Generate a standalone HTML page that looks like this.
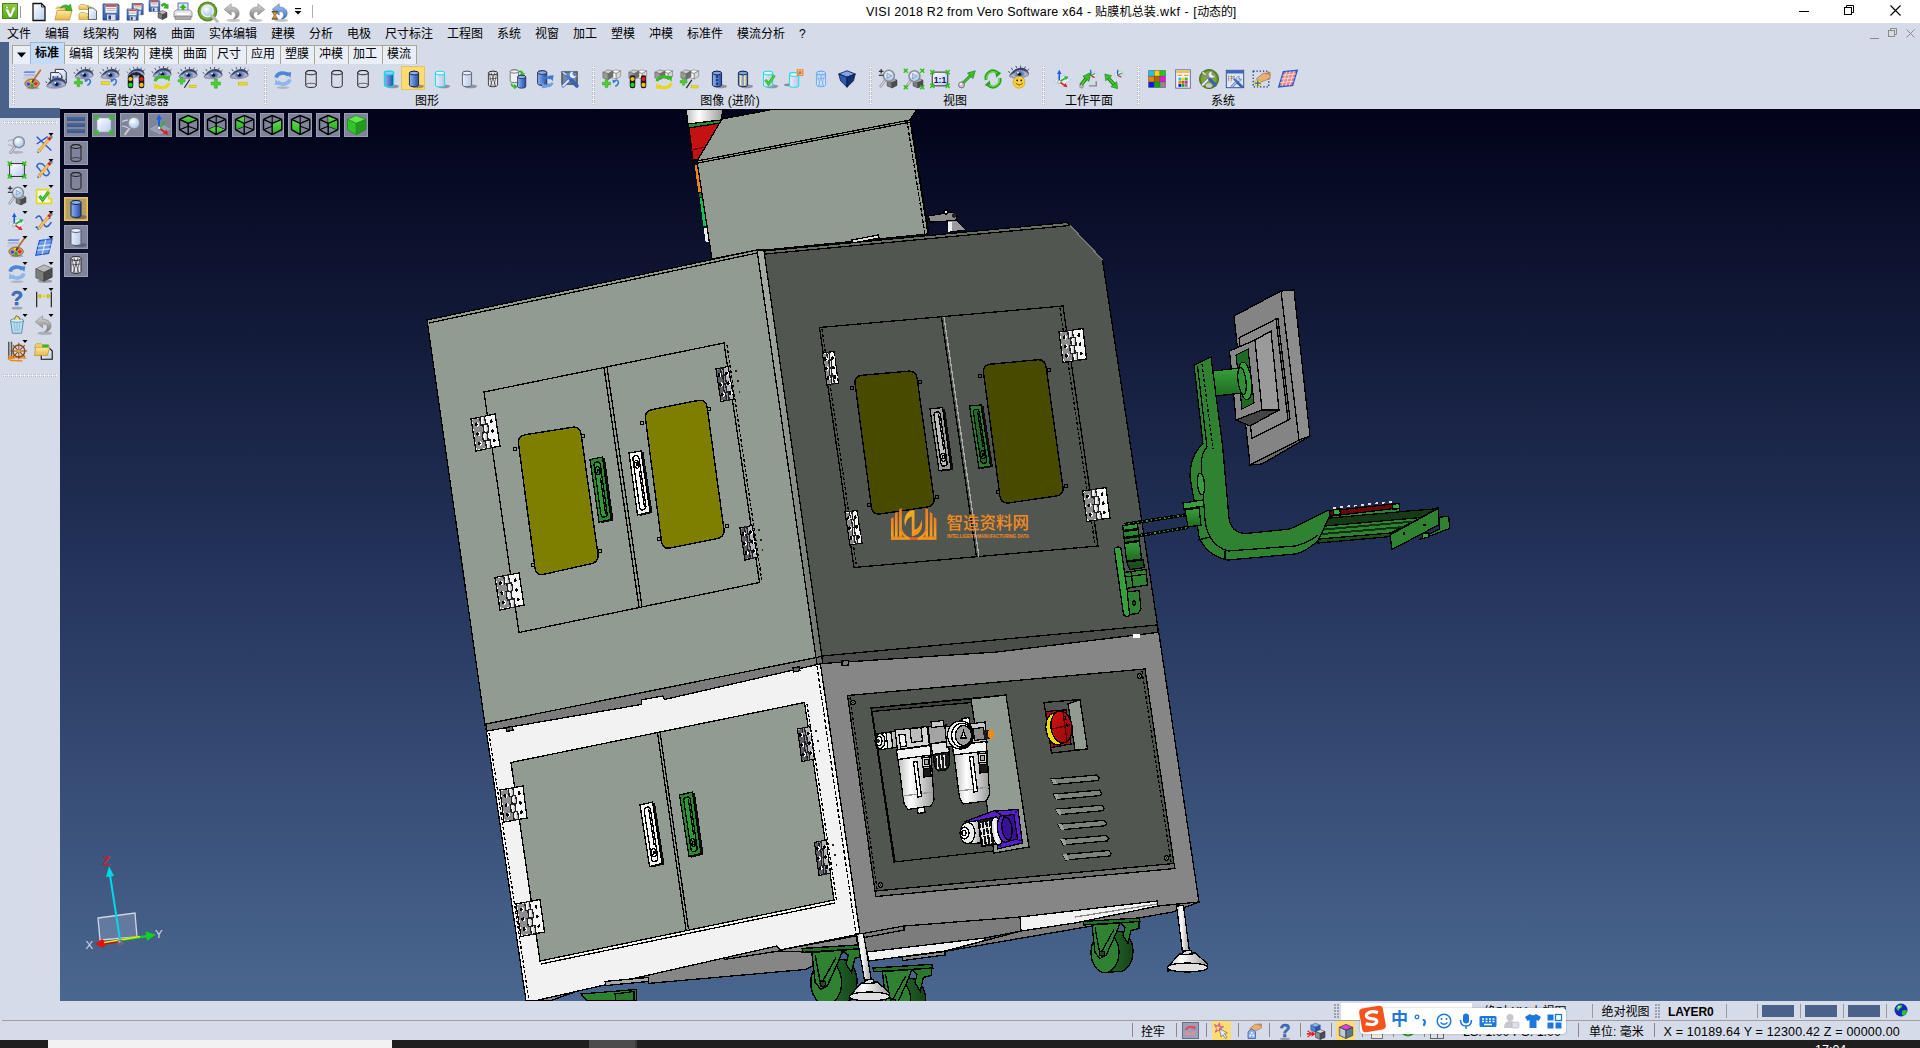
<!DOCTYPE html><html lang="zh"><head><meta charset="utf-8"><title>VISI 2018 R2</title><style>
*{box-sizing:border-box;margin:0;padding:0}
html,body{width:1920px;height:1048px;overflow:hidden;background:#d6dbe9;font-family:'Liberation Sans','Noto Sans CJK SC',sans-serif;font-size:12px;color:#000}
.abs{position:absolute}
#title{left:0;top:0;width:1920px;height:23px;background:#fff}
#title .t{position:absolute;left:866px;top:4px;width:371px;height:17px;line-height:17px;font-size:12.5px;white-space:nowrap;color:#000}
#menu{left:0;top:23px;width:1920px;height:20px;background:#d6dbe9}
#menu span{position:absolute;top:3px;line-height:16px;font-size:12px;white-space:nowrap}
#tabs{left:0;top:43px;width:1920px;height:21px;background:#d6dbe9}
.tab{position:absolute;top:2px;height:19px;border:1px solid #a9a78c;border-bottom:none;background:#e9eef9;font-size:12px;line-height:17px;text-align:center;white-space:nowrap}
.tab.act{top:-1px;height:22px;background:#c3dcf8;border-color:#9fb4cf;font-weight:bold;line-height:20px}
#tool{left:0;top:64px;width:1920px;height:45px;background:#d6dbe9}
.glabel{position:absolute;top:30px;height:14px;line-height:14px;font-size:12px;white-space:nowrap;transform:translateX(-50%)}
.grip{position:absolute;top:2px;width:3px;height:40px;background-image:radial-gradient(circle at 1.5px 1.5px,#fff 0,#fff 0.9px,rgba(160,165,180,0.9) 1.3px,transparent 1.6px);background-size:3px 4px}
.hgrip{position:absolute;left:3px;width:54px;height:3px;background-image:radial-gradient(circle at 1.5px 1.5px,#fff 0,#fff 0.9px,rgba(160,165,180,0.9) 1.3px,transparent 1.6px);background-size:4px 3px}
#lstrip{left:0;top:42px;width:9px;height:67px;background:#4a6189}
#lstrip2{left:0;top:108px;width:60px;height:10px;background:#4a6189}
#left{left:0;top:118px;width:60px;height:883px;background:#d6dbe9}
#status{left:0;top:1001px;width:1920px;height:39px;background:#d6dbe9}
#task{left:0;top:1040px;width:1920px;height:8px;background:#1f1f1f}
.vbtn{position:absolute;width:24px;height:24px;background:#7f849b;border:1px solid #9a9fb4}
.vbtn.on{background:#b59f62;border:1px solid #e8c86a;box-shadow:inset 0 0 0 1px #d4b25c}
.sep{position:absolute;width:1px;background:#9a9a9a}
.st{position:absolute;font-size:12px;line-height:16px;white-space:nowrap}
svg{position:absolute;overflow:visible}
</style></head><body>
<div id="title" class="abs"><div class="t"><span style="letter-spacing:0.250px">VISI 2018 R2 from Vero Software x64 - </span><span style="font-size:12px;letter-spacing:0.200px">贴膜机总装</span><span style="letter-spacing:0.550px">.wkf - [</span><span style="font-size:12px;letter-spacing:-0.200px">动态的</span>]</div>
<svg width="0" height="0" style="position:absolute"><defs>
<linearGradient id="gBlue" x1="0" y1="0" x2="1" y2="0"><stop offset="0" stop-color="#8fb4ec"/><stop offset="0.45" stop-color="#5c86d6"/><stop offset="1" stop-color="#274a9a"/></linearGradient>
<linearGradient id="gPale" x1="0" y1="0" x2="1" y2="0"><stop offset="0" stop-color="#e8eefb"/><stop offset="1" stop-color="#b9c8e6"/></linearGradient>
<linearGradient id="gDoc" x1="0" y1="0" x2="1" y2="1"><stop offset="0" stop-color="#ffffff"/><stop offset="1" stop-color="#b9ccf2"/></linearGradient>
<linearGradient id="gFold" x1="0" y1="0" x2="0" y2="1"><stop offset="0" stop-color="#fbe9a0"/><stop offset="1" stop-color="#e8b84a"/></linearGradient>
<linearGradient id="gFlop" x1="0" y1="0" x2="0" y2="1"><stop offset="0" stop-color="#6d8fd0"/><stop offset="1" stop-color="#34559f"/></linearGradient>
<linearGradient id="gGrayA" x1="0" y1="0" x2="0" y2="1"><stop offset="0" stop-color="#d8d8d8"/><stop offset="1" stop-color="#7c7c7c"/></linearGradient>
<linearGradient id="gBlueA" x1="0" y1="0" x2="0" y2="1"><stop offset="0" stop-color="#a8c6f0"/><stop offset="1" stop-color="#3f72c4"/></linearGradient>
<linearGradient id="gGreenA" x1="0" y1="0" x2="0" y2="1"><stop offset="0" stop-color="#7be04a"/><stop offset="1" stop-color="#2aa020"/></linearGradient>
<radialGradient id="gEye" cx="0.5" cy="0.5" r="0.5"><stop offset="0" stop-color="#1a2340"/><stop offset="0.35" stop-color="#4a68a8"/><stop offset="1" stop-color="#8aa2d0"/></radialGradient>
<radialGradient id="gLens" cx="0.4" cy="0.35" r="0.7"><stop offset="0" stop-color="#ffffff"/><stop offset="1" stop-color="#9cc0ea"/></radialGradient>
<linearGradient id="gCubeT" x1="0" y1="0" x2="0" y2="1"><stop offset="0" stop-color="#62e052"/><stop offset="1" stop-color="#28b020"/></linearGradient>
</defs></svg><div class="abs" style="left:2px;top:3px;width:16px;height:16px;background:linear-gradient(#8cc83c,#5aa820);border:1px solid #4a8a18"></div><svg style="left:2px;top:3px" width="16" height="16" viewBox="0 0 16 16"><path d="M3.500,6.500 L6.300,6.500 L8.300,11.500 L11,4.500 L13.500,4.500 L9.300,14 L7.200,14Z" fill="#fff"/><circle cx="5" cy="4.500" r="1" fill="#fff"/></svg><div class="abs" style="left:20px;top:6px;width:1px;height:12px;background:#999"></div><svg style="left:29px;top:2px" width="20" height="20" viewBox="0 0 20 20"><path d="M4,1.500 h8.500 l3.500,3.500 v13.500 h-12Z" fill="url(#gDoc)" stroke="#111" stroke-width="1.300"/><path d="M12.500,1.500 v3.500 h3.500" fill="none" stroke="#111" stroke-width="0.800"/></svg><svg style="left:54px;top:2px" width="20" height="20" viewBox="0 0 20 20"><path d="M1.500,7 l2,-2 h5 l1.500,1.500 h6 v3" fill="#f0d070" stroke="#b88a28" stroke-width="0.600"/><path d="M1,18 L3,8.500 h15 L15.500,18Z" fill="url(#gFold)" stroke="#b88a28" stroke-width="0.700"/><path d="M6,6 q4,-5 9,-2 l1.500,-2 l1.500,7 l-7,-1 l2,-1.800 q-3,-1.800 -7,-0.200Z" fill="#38b828" stroke="#1e7a18" stroke-width="0.500"/></svg><svg style="left:78px;top:2px" width="20" height="20" viewBox="0 0 20 20"><path d="M1,4 l1.500,-1.500 h4 l1,1 h3 v4 h-9.500Z" fill="url(#gFold)" stroke="#b88a28" stroke-width="0.600"/><path d="M1,12 l1.500,-1.500 h4 l1,1 h3 v6 h-9.500Z" fill="url(#gFold)" stroke="#b88a28" stroke-width="0.600"/><path d="M9,5 h4 M9,15 h4 M13,5 v10" stroke="#58c838" stroke-width="1.200" fill="none"/><path d="M10.500,6 h5 l3,3 v8.500 h-8Z" fill="url(#gDoc)" stroke="#444" stroke-width="0.800"/></svg><svg style="left:101px;top:2px" width="20" height="20" viewBox="0 0 20 20"><g transform="translate(2,2) scale(1.0)"><path d="M0,0 h15 l1,1 v15 h-16Z" fill="url(#gFlop)" stroke="#23407e" stroke-width="0.800"/><rect x="2.500" y="0.800" width="11" height="8" fill="#f4f4f4"/><rect x="2.500" y="0.800" width="11" height="2" fill="#d84a3a"/><path d="M3.500,4.500 h9 M3.500,6.300 h9" stroke="#9a9a9a" stroke-width="0.700"/><rect x="4" y="10.500" width="8.500" height="5.500" fill="#d8dce8"/><rect x="5.500" y="11.500" width="2.500" height="4" fill="#23407e"/></g></svg><svg style="left:125px;top:2px" width="20" height="20" viewBox="0 0 20 20"><g transform="translate(7,1.5) scale(0.7)"><path d="M0,0 h15 l1,1 v15 h-16Z" fill="url(#gFlop)" stroke="#23407e" stroke-width="0.800"/><rect x="2.500" y="0.800" width="11" height="8" fill="#f4f4f4"/><rect x="2.500" y="0.800" width="11" height="2" fill="#d84a3a"/><path d="M3.500,4.500 h9 M3.500,6.300 h9" stroke="#9a9a9a" stroke-width="0.700"/><rect x="4" y="10.500" width="8.500" height="5.500" fill="#d8dce8"/><rect x="5.500" y="11.500" width="2.500" height="4" fill="#23407e"/></g><g transform="translate(2,7) scale(0.7)"><path d="M0,0 h15 l1,1 v15 h-16Z" fill="url(#gFlop)" stroke="#23407e" stroke-width="0.800"/><rect x="2.500" y="0.800" width="11" height="8" fill="#f4f4f4"/><rect x="2.500" y="0.800" width="11" height="2" fill="#d84a3a"/><path d="M3.500,4.500 h9 M3.500,6.300 h9" stroke="#9a9a9a" stroke-width="0.700"/><rect x="4" y="10.500" width="8.500" height="5.500" fill="#d8dce8"/><rect x="5.500" y="11.500" width="2.500" height="4" fill="#23407e"/></g></svg><svg style="left:148px;top:0px" width="22" height="22" viewBox="0 0 22 22"><g transform="translate(1,0.5) scale(0.68)"><path d="M0,0 h15 l1,1 v15 h-16Z" fill="url(#gFlop)" stroke="#23407e" stroke-width="0.800"/><rect x="2.500" y="0.800" width="11" height="8" fill="#f4f4f4"/><rect x="2.500" y="0.800" width="11" height="2" fill="#d84a3a"/><path d="M3.500,4.500 h9 M3.500,6.300 h9" stroke="#9a9a9a" stroke-width="0.700"/><rect x="4" y="10.500" width="8.500" height="5.500" fill="#d8dce8"/><rect x="5.500" y="11.500" width="2.500" height="4" fill="#23407e"/></g><path d="M13,5 q3,-4 6,0 l1.200,-1 l0,4.500 l-4.500,-0.500 l1.500,-1.200 q-1.500,-2 -3,0Z" fill="#38b828" stroke="#1e7a18" stroke-width="0.400"/><polygon points="10,12.75 14.5,10.5 19.0,12.375 14.5,14.625" fill="#b8b8b8" stroke="#333" stroke-width="0.500"/><polygon points="10,12.75 14.5,14.625 14.5,19.5 10,17.625" fill="#7c7c7c" stroke="#333" stroke-width="0.500"/><polygon points="14.5,14.625 19.0,12.375 19.0,17.25 14.5,19.5" fill="#4c4c4c" stroke="#333" stroke-width="0.500"/></svg><svg style="left:172px;top:1px" width="22" height="22" viewBox="0 0 22 22"><rect x="6" y="2" width="10" height="8" fill="#d8e4f8" stroke="#4a5a8a" stroke-width="0.800"/><path d="M11,3 l3.500,4 h-2.200 v2.500 h-2.600 v-2.500 h-2.200Z" fill="#28b828"/><path d="M2,11 l2,-2 h14 l2,2 v5 h-18Z" fill="#e8e8ec" stroke="#777" stroke-width="0.700"/><rect x="3" y="15" width="16" height="3.500" fill="#aaa" stroke="#666" stroke-width="0.500"/><rect x="5" y="12" width="12" height="2" fill="#fff"/></svg><svg style="left:197px;top:1px" width="22" height="22" viewBox="0 0 21 21"><circle cx="10" cy="10" r="9.500" fill="#5a8a28"/><circle cx="10" cy="10" r="8" fill="#7aa838"/><circle cx="10" cy="9.5" r="5.5" fill="url(#gLens)" stroke="#e8eef8" stroke-width="1.600"/><path d="M14,14 L19.500,19.500" stroke="#b8b8c0" stroke-width="2.600" stroke-linecap="round"/></svg><svg style="left:221.5px;top:1.5px" width="21" height="21" viewBox="0 0 24 24"><g ><ellipse cx="13" cy="21" rx="8" ry="1.800" fill="rgba(90,90,100,0.35)"/><path d="M2.500,8.500 L10.500,2 L10.500,5.800 C17,5.500 20.500,10 19.500,14.500 C18.800,17.500 16.500,19 13,19.500 C15.500,17 16.200,14.500 15,12.500 C14,11 12.500,10.800 10.500,11 L10.500,15Z" fill="url(#gGrayA)" stroke="#7a7a7a" stroke-width="0.600"/></g></svg><svg style="left:245.5px;top:1.5px" width="21" height="21" viewBox="0 0 24 24"><g transform="translate(24,0) scale(-1,1)"><ellipse cx="13" cy="21" rx="8" ry="1.800" fill="rgba(90,90,100,0.35)"/><path d="M2.500,8.500 L10.500,2 L10.500,5.800 C17,5.500 20.500,10 19.500,14.500 C18.800,17.500 16.500,19 13,19.500 C15.500,17 16.200,14.500 15,12.500 C14,11 12.500,10.800 10.500,11 L10.500,15Z" fill="url(#gGrayA)" stroke="#7a7a7a" stroke-width="0.600"/></g></svg><svg style="left:269.5px;top:1.5px" width="21" height="21" viewBox="0 0 24 24"><g ><ellipse cx="13" cy="21" rx="8" ry="1.800" fill="rgba(90,90,100,0.35)"/><path d="M2.500,8.500 L10.500,2 L10.500,5.800 C17,5.500 20.500,10 19.500,14.500 C18.800,17.500 16.500,19 13,19.500 C15.500,17 16.200,14.500 15,12.500 C14,11 12.500,10.800 10.500,11 L10.500,15Z" fill="url(#gBlueA)" stroke="#3a68b0" stroke-width="0.600"/></g><path d="M2.500,11 h6 l-2.200,4 l2.200,4.500 h-6 l2.200,-4.500Z" fill="#c8a048" stroke="#6a4a18" stroke-width="0.700"/><path d="M2,11 h7 M2,19.500 h7" stroke="#6a4a18" stroke-width="1.200"/></svg><svg style="left:294px;top:7.5px" width="8" height="8" viewBox="0 0 8 8"><rect x="1" y="0" width="6" height="1.200" fill="#000"/><polygon points="0.500,3 7.500,3 4,6.500" fill="#000"/></svg><div class="abs" style="left:312px;top:5px;width:1px;height:13px;background:#b0b0b0"></div><svg style="left:1799px;top:6px" width="10" height="10" viewBox="0 0 10 10"><path d="M0,5.500 h10" stroke="#000" stroke-width="1"/></svg><svg style="left:1844px;top:5px" width="10" height="10" viewBox="0 0 10 10"><path d="M2.500,2.500 v-2 h7 v7 h-2" fill="none" stroke="#000" stroke-width="1"/><rect x="0.500" y="2.500" width="7" height="7" fill="none" stroke="#000" stroke-width="1"/></svg><svg style="left:1889.5px;top:4.5px" width="11" height="11" viewBox="0 0 11 11"><path d="M0.500,0.500 L10.500,10.500 M10.500,0.500 L0.500,10.500" stroke="#000" stroke-width="1.100"/></svg>
</div>
<div id="menu" class="abs"><span style="left:7px">文件</span><span style="left:45px">编辑</span><span style="left:83px">线架构</span><span style="left:133px">网格</span><span style="left:171px">曲面</span><span style="left:209px">实体编辑</span><span style="left:271px">建模</span><span style="left:309px">分析</span><span style="left:347px">电极</span><span style="left:385px">尺寸标注</span><span style="left:447px">工程图</span><span style="left:497px">系统</span><span style="left:535px">视窗</span><span style="left:573px">加工</span><span style="left:611px">塑模</span><span style="left:649px">冲模</span><span style="left:687px">标准件</span><span style="left:737px">模流分析</span><span style="left:799px">?</span><svg style="left:1869.5px;top:7.5px" width="9" height="9" viewBox="0 0 9 9"><path d="M0,7.500 h9" stroke="#8a8a8a" stroke-width="1"/></svg><svg style="left:1888px;top:5px" width="9" height="9" viewBox="0 0 9 9"><path d="M2.500,2.500 v-2 h6 v6 h-2" fill="none" stroke="#8a8a8a" stroke-width="1"/><rect x="0.500" y="2.500" width="6" height="6" fill="none" stroke="#8a8a8a" stroke-width="1"/></svg><svg style="left:1906px;top:5.5px" width="9" height="9" viewBox="0 0 9 9"><path d="M0.500,0.500 L8.500,8.500 M8.500,0.500 L0.500,8.500" stroke="#8a8a8a" stroke-width="1"/></svg></div>
<div id="tabs" class="abs"><div class="tab" style="left:11.500px;width:19px"><svg style="left:4px;top:6px" width="9" height="6"><polygon points="0,0.5 9,0.5 4.5,5.5" fill="#000"/></svg></div><div class="tab act" style="left:29.5px;width:35.0px">标准</div><div class="tab" style="left:63.5px;width:35.0px">编辑</div><div class="tab" style="left:97.5px;width:47.0px">线架构</div><div class="tab" style="left:143.5px;width:35.0px">建模</div><div class="tab" style="left:177.5px;width:35.0px">曲面</div><div class="tab" style="left:211.5px;width:35.0px">尺寸</div><div class="tab" style="left:245.5px;width:35.0px">应用</div><div class="tab" style="left:279.5px;width:35.0px">塑膜</div><div class="tab" style="left:313.5px;width:35.0px">冲模</div><div class="tab" style="left:347.5px;width:35.0px">加工</div><div class="tab" style="left:381.5px;width:35.0px">模流</div></div>
<div id="tool" class="abs">
<div class="grip" style="left:12px"></div>
<div class="grip" style="left:263.5px"></div>
<div class="grip" style="left:592.3px"></div>
<div class="grip" style="left:868.8px"></div>
<div class="grip" style="left:1041.8px"></div>
<div class="grip" style="left:1137px"></div>
<div class="glabel" style="left:137px">属性/过滤器</div>
<div class="glabel" style="left:427px">图形</div>
<div class="glabel" style="left:730px">图像 (进阶)</div>
<div class="glabel" style="left:955px">视图</div>
<div class="glabel" style="left:1089px">工作平面</div>
<div class="glabel" style="left:1223px">系统</div>
<div class="abs" style="left:401px;top:2px;width:24px;height:24px;background:#fddc72;border:1px solid #e5c365"></div><svg style="left:22px;top:3.5px" width="22" height="22" viewBox="0 0 24 24"><path d="M3,3.500 h12 l-1.500,2 h-12Z" fill="#6b86e0"/><path d="M3,6.500 h12 l-1.500,2 h-12Z" fill="#a8b4e8"/><path d="M3,9.500 h12 l-1.500,2 h-12Z" fill="#d8d8e0" stroke="#999" stroke-width="0.300"/><ellipse cx="11" cy="17" rx="8" ry="5" fill="#c89868" stroke="#7a5230" stroke-width="0.700"/><ellipse cx="12" cy="22" rx="7" ry="1.300" fill="rgba(80,80,90,0.35)"/><circle cx="7" cy="17.500" r="1.800" fill="#2050e0"/><circle cx="11" cy="19" r="1.800" fill="#20b030"/><circle cx="15" cy="17" r="1.800" fill="#e02020"/><circle cx="10" cy="14.500" r="1.300" fill="#f0e020"/><path d="M20.500,2 L12,14" stroke="#b86a28" stroke-width="1.800"/><path d="M13,12.500 L11,16" stroke="#444" stroke-width="2"/></svg><svg style="left:47px;top:3.5px" width="22" height="22" viewBox="0 0 24 24"><path d="M9,1.500 h9 l3,3 v12 h-12Z" fill="url(#gDoc)" stroke="#222" stroke-width="1"/><path d="M4,5 h9 l3,3 v12 h-12Z" fill="url(#gDoc)" stroke="#222" stroke-width="1"/><rect x="5.500" y="9" width="7" height="5" fill="#6b8fe0"/><g transform="translate(10,17) scale(1.05)"><path d="M-10.500,2.500 Q-5,-6.500 3.500,-6 Q9.500,-5 10.500,1 Q4,-2 -2,-1 Q-7,0 -10.500,2.500Z" fill="#3c4262"/><path d="M-10,3 Q-3,-3.500 4,-3 Q8.500,-2.500 10,1.500 Q5,4.500 0,4.500 Q-6,4.500 -10,3Z" fill="#aab3d0" stroke="#5a6080" stroke-width="0.500"/><ellipse cx="0.500" cy="0.600" rx="5.400" ry="3.900" fill="url(#gEye)"/><circle cx="0.500" cy="0.800" r="1.700" fill="#0c1226"/><circle cx="-1" cy="-0.800" r="0.900" fill="#fff"/><path d="M-9.500,-0.500 L-11,-2.500 M-6.500,-3.500 L-8,-6 M-2.500,-5.500 L-3.200,-8 M1.500,-5.800 L1.800,-8.200 M5.500,-5 L6.800,-7.300 M8.500,-3 L10.500,-4.800" stroke="#3c4262" stroke-width="0.900" fill="none"/><path d="M-9,4.200 Q0,6.500 9.500,2.500" fill="none" stroke="#b08a90" stroke-width="0.700"/></g></svg><svg style="left:73px;top:3.5px" width="22" height="22" viewBox="0 0 24 24"><g transform="translate(12,7) scale(1.0)"><path d="M-10.500,2.500 Q-5,-6.500 3.500,-6 Q9.500,-5 10.500,1 Q4,-2 -2,-1 Q-7,0 -10.500,2.500Z" fill="#3c4262"/><path d="M-10,3 Q-3,-3.500 4,-3 Q8.500,-2.500 10,1.500 Q5,4.500 0,4.500 Q-6,4.500 -10,3Z" fill="#aab3d0" stroke="#5a6080" stroke-width="0.500"/><ellipse cx="0.500" cy="0.600" rx="5.400" ry="3.900" fill="url(#gEye)"/><circle cx="0.500" cy="0.800" r="1.700" fill="#0c1226"/><circle cx="-1" cy="-0.800" r="0.900" fill="#fff"/><path d="M-9.500,-0.500 L-11,-2.500 M-6.500,-3.500 L-8,-6 M-2.500,-5.500 L-3.200,-8 M1.500,-5.800 L1.800,-8.200 M5.500,-5 L6.800,-7.300 M8.500,-3 L10.500,-4.800" stroke="#3c4262" stroke-width="0.900" fill="none"/><path d="M-9,4.200 Q0,6.500 9.500,2.500" fill="none" stroke="#b08a90" stroke-width="0.700"/></g><path d="M1.5999999999999996,14.57 h2.9700000000000006 v-2.9700000000000006 h2.8600000000000003 v2.9700000000000006 h2.9700000000000006 v2.8600000000000003 h-2.9700000000000006 v2.9700000000000006 h-2.8600000000000003 v-2.9700000000000006 h-2.9700000000000006Z" fill="#4ad22a" stroke="#2a9a18" stroke-width="0.500"/><path d="M14,13.5 q4,-3 5,1 q0,3 -3.500,4.500" fill="none" stroke="#3b74d0" stroke-width="1.600"/><path d="M12.5,11.5 l0.500,4 l3.500,-1.500Z" fill="#3b74d0"/></svg><svg style="left:99px;top:3.5px" width="22" height="22" viewBox="0 0 24 24"><g transform="translate(12,7) scale(1.0)"><path d="M-10.500,2.500 Q-5,-6.500 3.500,-6 Q9.500,-5 10.500,1 Q4,-2 -2,-1 Q-7,0 -10.500,2.500Z" fill="#3c4262"/><path d="M-10,3 Q-3,-3.500 4,-3 Q8.500,-2.500 10,1.500 Q5,4.500 0,4.500 Q-6,4.500 -10,3Z" fill="#aab3d0" stroke="#5a6080" stroke-width="0.500"/><ellipse cx="0.500" cy="0.600" rx="5.400" ry="3.900" fill="url(#gEye)"/><circle cx="0.500" cy="0.800" r="1.700" fill="#0c1226"/><circle cx="-1" cy="-0.800" r="0.900" fill="#fff"/><path d="M-9.500,-0.500 L-11,-2.500 M-6.500,-3.500 L-8,-6 M-2.500,-5.500 L-3.200,-8 M1.500,-5.800 L1.800,-8.200 M5.500,-5 L6.800,-7.300 M8.500,-3 L10.500,-4.800" stroke="#3c4262" stroke-width="0.900" fill="none"/><path d="M-9,4.200 Q0,6.500 9.500,2.500" fill="none" stroke="#b08a90" stroke-width="0.700"/></g><rect x="2.5999999999999996" y="15.07" width="8.8" height="2.8600000000000003" fill="#f2e010" stroke="#b8a800" stroke-width="0.500"/><path d="M14,13.5 q4,-3 5,1 q0,3 -3.500,4.500" fill="none" stroke="#3b74d0" stroke-width="1.600"/><path d="M12.5,11.5 l0.500,4 l3.500,-1.500Z" fill="#3b74d0"/></svg><svg style="left:125px;top:3.5px" width="22" height="22" viewBox="0 0 24 24"><g transform="translate(12,6) scale(0.9)"><path d="M-10.500,2.500 Q-5,-6.500 3.500,-6 Q9.500,-5 10.500,1 Q4,-2 -2,-1 Q-7,0 -10.500,2.500Z" fill="#3c4262"/><path d="M-10,3 Q-3,-3.500 4,-3 Q8.500,-2.500 10,1.500 Q5,4.500 0,4.500 Q-6,4.500 -10,3Z" fill="#aab3d0" stroke="#5a6080" stroke-width="0.500"/><ellipse cx="0.500" cy="0.600" rx="5.400" ry="3.900" fill="url(#gEye)"/><circle cx="0.500" cy="0.800" r="1.700" fill="#0c1226"/><circle cx="-1" cy="-0.800" r="0.900" fill="#fff"/><path d="M-9.500,-0.500 L-11,-2.500 M-6.500,-3.500 L-8,-6 M-2.500,-5.500 L-3.200,-8 M1.500,-5.800 L1.800,-8.200 M5.500,-5 L6.800,-7.300 M8.500,-3 L10.500,-4.800" stroke="#3c4262" stroke-width="0.900" fill="none"/><path d="M-9,4.200 Q0,6.500 9.500,2.500" fill="none" stroke="#b08a90" stroke-width="0.700"/></g><path d="M5,9 Q12,2 19,9" fill="none" stroke="#222" stroke-width="2.500"/><rect x="3" y="8" width="6" height="14" rx="2.500" fill="#1c1c1c"/><rect x="15" y="8" width="6" height="14" rx="2.500" fill="#1c1c1c"/><circle cx="6" cy="12" r="2.300" fill="#f8c010"/><circle cx="6" cy="18.500" r="2.300" fill="#18d818"/><circle cx="18" cy="12" r="2.300" fill="#f01818"/><circle cx="18" cy="18.500" r="2.300" fill="#f8c010"/></svg><svg style="left:151px;top:3.5px" width="22" height="22" viewBox="0 0 24 24"><g transform="translate(12,6) scale(1.0)"><path d="M-10.500,2.500 Q-5,-6.500 3.500,-6 Q9.500,-5 10.500,1 Q4,-2 -2,-1 Q-7,0 -10.500,2.500Z" fill="#3c4262"/><path d="M-10,3 Q-3,-3.500 4,-3 Q8.500,-2.500 10,1.500 Q5,4.500 0,4.500 Q-6,4.500 -10,3Z" fill="#aab3d0" stroke="#5a6080" stroke-width="0.500"/><ellipse cx="0.500" cy="0.600" rx="5.400" ry="3.900" fill="url(#gEye)"/><circle cx="0.500" cy="0.800" r="1.700" fill="#0c1226"/><circle cx="-1" cy="-0.800" r="0.900" fill="#fff"/><path d="M-9.500,-0.500 L-11,-2.500 M-6.500,-3.500 L-8,-6 M-2.500,-5.500 L-3.200,-8 M1.500,-5.800 L1.800,-8.200 M5.500,-5 L6.800,-7.300 M8.500,-3 L10.500,-4.800" stroke="#3c4262" stroke-width="0.900" fill="none"/><path d="M-9,4.200 Q0,6.500 9.500,2.500" fill="none" stroke="#b08a90" stroke-width="0.700"/></g><path d="M4.5,14.5 A7.5,6.0 0 0,1 18.0,12.0" fill="none" stroke="#3ab828" stroke-width="3.4"/><path d="M15.0,9.0 L21.0,8.5 L20.0,15.0Z" fill="#3ab828"/><path d="M19.5,16.5 A7.5,6.0 0 0,1 6.0,19.0" fill="none" stroke="#e8d818" stroke-width="3.4"/><path d="M9.0,22.0 L3.0,22.5 L4.0,16.0Z" fill="#e8d818"/></svg><svg style="left:177px;top:3.5px" width="22" height="22" viewBox="0 0 24 24"><g transform="translate(12,7) scale(1.0)"><path d="M-10.500,2.500 Q-5,-6.500 3.500,-6 Q9.500,-5 10.500,1 Q4,-2 -2,-1 Q-7,0 -10.500,2.500Z" fill="#3c4262"/><path d="M-10,3 Q-3,-3.500 4,-3 Q8.500,-2.500 10,1.500 Q5,4.500 0,4.500 Q-6,4.500 -10,3Z" fill="#aab3d0" stroke="#5a6080" stroke-width="0.500"/><ellipse cx="0.500" cy="0.600" rx="5.400" ry="3.900" fill="url(#gEye)"/><circle cx="0.500" cy="0.800" r="1.700" fill="#0c1226"/><circle cx="-1" cy="-0.800" r="0.900" fill="#fff"/><path d="M-9.500,-0.500 L-11,-2.500 M-6.500,-3.500 L-8,-6 M-2.500,-5.500 L-3.200,-8 M1.500,-5.800 L1.800,-8.200 M5.500,-5 L6.800,-7.300 M8.500,-3 L10.500,-4.800" stroke="#3c4262" stroke-width="0.900" fill="none"/><path d="M-9,4.200 Q0,6.500 9.500,2.500" fill="none" stroke="#b08a90" stroke-width="0.700"/></g><path d="M1.2000000000000002,12.765 h2.565 v-2.565 h2.4699999999999998 v2.565 h2.565 v2.4699999999999998 h-2.565 v2.565 h-2.4699999999999998 v-2.565 h-2.565Z" fill="#4ad22a" stroke="#2a9a18" stroke-width="0.500"/><path d="M8,21.500 L14,12.500" stroke="#222" stroke-width="1.300"/><rect x="13.2" y="18.765" width="7.6" height="2.4699999999999998" fill="#f2e010" stroke="#b8a800" stroke-width="0.500"/></svg><svg style="left:203px;top:3.5px" width="22" height="22" viewBox="0 0 24 24"><g transform="translate(11,7) scale(1.0)"><path d="M-10.500,2.500 Q-5,-6.500 3.500,-6 Q9.500,-5 10.500,1 Q4,-2 -2,-1 Q-7,0 -10.500,2.500Z" fill="#3c4262"/><path d="M-10,3 Q-3,-3.500 4,-3 Q8.500,-2.500 10,1.500 Q5,4.500 0,4.500 Q-6,4.500 -10,3Z" fill="#aab3d0" stroke="#5a6080" stroke-width="0.500"/><ellipse cx="0.500" cy="0.600" rx="5.400" ry="3.900" fill="url(#gEye)"/><circle cx="0.500" cy="0.800" r="1.700" fill="#0c1226"/><circle cx="-1" cy="-0.800" r="0.900" fill="#fff"/><path d="M-9.500,-0.500 L-11,-2.500 M-6.500,-3.500 L-8,-6 M-2.500,-5.500 L-3.200,-8 M1.500,-5.800 L1.800,-8.200 M5.500,-5 L6.800,-7.300 M8.500,-3 L10.500,-4.800" stroke="#3c4262" stroke-width="0.900" fill="none"/><path d="M-9,4.200 Q0,6.500 9.500,2.500" fill="none" stroke="#b08a90" stroke-width="0.700"/></g><path d="M9.0,15.375 h3.375 v-3.375 h3.25 v3.375 h3.375 v3.25 h-3.375 v3.375 h-3.25 v-3.375 h-3.375Z" fill="#4ad22a" stroke="#2a9a18" stroke-width="0.500"/></svg><svg style="left:229px;top:3.5px" width="22" height="22" viewBox="0 0 24 24"><g transform="translate(11,7) scale(1.0)"><path d="M-10.500,2.500 Q-5,-6.500 3.500,-6 Q9.500,-5 10.500,1 Q4,-2 -2,-1 Q-7,0 -10.500,2.500Z" fill="#3c4262"/><path d="M-10,3 Q-3,-3.500 4,-3 Q8.500,-2.500 10,1.500 Q5,4.500 0,4.500 Q-6,4.500 -10,3Z" fill="#aab3d0" stroke="#5a6080" stroke-width="0.500"/><ellipse cx="0.500" cy="0.600" rx="5.400" ry="3.900" fill="url(#gEye)"/><circle cx="0.500" cy="0.800" r="1.700" fill="#0c1226"/><circle cx="-1" cy="-0.800" r="0.900" fill="#fff"/><path d="M-9.500,-0.500 L-11,-2.500 M-6.500,-3.500 L-8,-6 M-2.500,-5.500 L-3.200,-8 M1.500,-5.800 L1.800,-8.200 M5.500,-5 L6.800,-7.300 M8.500,-3 L10.500,-4.800" stroke="#3c4262" stroke-width="0.900" fill="none"/><path d="M-9,4.200 Q0,6.500 9.500,2.500" fill="none" stroke="#b08a90" stroke-width="0.700"/></g><rect x="10.2" y="15.44" width="9.6" height="3.12" fill="#f2e010" stroke="#b8a800" stroke-width="0.500"/></svg><svg style="left:272px;top:3.5px" width="22" height="22" viewBox="0 0 24 24"><ellipse cx="12" cy="21.500" rx="7" ry="1.300" fill="rgba(80,90,110,0.3)"/><path d="M4.5,10.5 A7.5,6.0 0 0,1 18.0,8.0" fill="none" stroke="#4f86d4" stroke-width="4"/><path d="M15.0,5.0 L21.0,4.5 L20.0,11.0Z" fill="#4f86d4"/><path d="M19.5,12.5 A7.5,6.0 0 0,1 6.0,15.0" fill="none" stroke="#8db6ea" stroke-width="4"/><path d="M9.0,18.0 L3.0,18.5 L4.0,12.0Z" fill="#8db6ea"/></svg><svg style="left:299.5px;top:3.5px" width="22" height="22" viewBox="0 0 24 24"><path d="M6.25,5.050000000000001 L6.25,18.95 A5.75,2.3000000000000003 0 0,0 17.75,18.95 L17.75,5.050000000000001 A5.75,2.3000000000000003 0 0,0 6.25,5.050000000000001Z" fill="none" stroke="#222" stroke-width="1.0"/><ellipse cx="12" cy="5.050000000000001" rx="5.75" ry="2.3000000000000003" fill="none" stroke="#222" stroke-width="1.0"/><path d="M6.25,18.95 A5.75,2.3000000000000003 0 0,1 17.75,18.95" fill="none" stroke="#222" stroke-width="0.7"/></svg><svg style="left:325.5px;top:3.5px" width="22" height="22" viewBox="0 0 24 24"><path d="M6.25,5.050000000000001 L6.25,18.95 A5.75,2.3000000000000003 0 0,0 17.75,18.95 L17.75,5.050000000000001 A5.75,2.3000000000000003 0 0,0 6.25,5.050000000000001Z" fill="none" stroke="#222" stroke-width="1.0"/><ellipse cx="12" cy="5.050000000000001" rx="5.75" ry="2.3000000000000003" fill="none" stroke="#222" stroke-width="1.0"/></svg><svg style="left:351.5px;top:3.5px" width="22" height="22" viewBox="0 0 24 24"><path d="M6.25,5.050000000000001 L6.25,18.95 A5.75,2.3000000000000003 0 0,0 17.75,18.95 L17.75,5.050000000000001 A5.75,2.3000000000000003 0 0,0 6.25,5.050000000000001Z" fill="none" stroke="#222" stroke-width="1.0"/><ellipse cx="12" cy="5.050000000000001" rx="5.75" ry="2.3000000000000003" fill="none" stroke="#222" stroke-width="1.0"/><path d="M6.25,18.95 A5.75,2.3000000000000003 0 0,1 17.75,18.95" fill="none" stroke="#222" stroke-width="0.7"/></svg><svg style="left:377.5px;top:3.5px" width="22" height="22" viewBox="0 0 24 24"><ellipse cx="16" cy="20.0" rx="7.0" ry="2.0" fill="rgba(60,60,80,0.45)"/><path d="M7.0,5.5 L7.0,18.5 A5.0,2.0 0 0,0 17.0,18.5 L17.0,5.5 A5.0,2.0 0 0,0 7.0,5.5Z" fill="url(#gBlue)" stroke="#10d8e8" stroke-width="1.3"/><ellipse cx="12" cy="5.5" rx="5.0" ry="2.0" fill="#9cc4f4" stroke="#10d8e8" stroke-width="1.3"/></svg><svg style="left:403px;top:3.5px" width="22" height="22" viewBox="0 0 24 24"><ellipse cx="16" cy="20.0" rx="7.0" ry="2.0" fill="rgba(60,60,80,0.45)"/><path d="M7.0,5.5 L7.0,18.5 A5.0,2.0 0 0,0 17.0,18.5 L17.0,5.5 A5.0,2.0 0 0,0 7.0,5.5Z" fill="url(#gBlue)" stroke="#16224a" stroke-width="1.0"/><ellipse cx="12" cy="5.5" rx="5.0" ry="2.0" fill="#8fb0ea" stroke="#16224a" stroke-width="1.0"/></svg><svg style="left:429px;top:3.5px" width="22" height="22" viewBox="0 0 24 24"><ellipse cx="16" cy="20.0" rx="7.0" ry="2.0" fill="rgba(60,60,80,0.45)"/><path d="M7.0,5.5 L7.0,18.5 A5.0,2.0 0 0,0 17.0,18.5 L17.0,5.5 A5.0,2.0 0 0,0 7.0,5.5Z" fill="url(#gPale)" stroke="#28dce8" stroke-width="1.2"/><ellipse cx="12" cy="5.5" rx="5.0" ry="2.0" fill="#eef4fc" stroke="#28dce8" stroke-width="1.2"/></svg><svg style="left:455.5px;top:3.5px" width="22" height="22" viewBox="0 0 24 24"><ellipse cx="16" cy="20.0" rx="7.0" ry="2.0" fill="rgba(60,60,80,0.45)"/><path d="M7.0,5.5 L7.0,18.5 A5.0,2.0 0 0,0 17.0,18.5 L17.0,5.5 A5.0,2.0 0 0,0 7.0,5.5Z" fill="url(#gPale)" stroke="#4a5068" stroke-width="0.9"/><ellipse cx="12" cy="5.5" rx="5.0" ry="2.0" fill="#eef2fb" stroke="#4a5068" stroke-width="0.9"/></svg><svg style="left:481.5px;top:3.5px" width="22" height="22" viewBox="0 0 24 24"><path d="M7.0,5.5 L7.0,18.5 A5.0,2.0 0 0,0 17.0,18.5 L17.0,5.5 A5.0,2.0 0 0,0 7.0,5.5Z" fill="#e8e8ee" stroke="#222" stroke-width="0.9"/><ellipse cx="12" cy="5.5" rx="5.0" ry="2.0" fill="#e8e8ee" stroke="#222" stroke-width="0.9"/><path d="M8,6 L11,20 M10,5 L15,20 M14,5 L9,20 M16,6 L13,20 M7.500,12 L16.500,11" stroke="#222" stroke-width="0.600" fill="none"/></svg><svg style="left:507px;top:3.5px" width="22" height="22" viewBox="0 0 24 24"><path d="M3.5,3.8 L3.5,14.2 A4.5,1.8 0 0,0 12.5,14.2 L12.5,3.8 A4.5,1.8 0 0,0 3.5,3.8Z" fill="#f0f0f4" stroke="#555" stroke-width="0.8"/><ellipse cx="8" cy="3.8" rx="4.5" ry="1.8" fill="#f0f0f4" stroke="#555" stroke-width="0.8"/><path d="M13,3 q4,-1 5,3 l2,-0.500 l-3,4 l-3.500,-3 l2,-0.300 q-0.500,-1.800 -2.500,-1.500Z" fill="#30b828"/><path d="M4,17 q0,4 4,4.500 l-0.300,2 l4,-3 l-4,-3 l0,2 q-1.800,-0.500 -2,-2.500Z" fill="#30b828"/><path d="M11.5,9.8 L11.5,20.2 A4.5,1.8 0 0,0 20.5,20.2 L20.5,9.8 A4.5,1.8 0 0,0 11.5,9.8Z" fill="url(#gBlue)" stroke="#16224a" stroke-width="0.8"/><ellipse cx="16" cy="9.8" rx="4.5" ry="1.8" fill="#8fb0ea" stroke="#16224a" stroke-width="0.8"/></svg><svg style="left:533px;top:3.5px" width="22" height="22" viewBox="0 0 24 24"><ellipse cx="14" cy="18.5" rx="7.0" ry="2.0" fill="rgba(60,60,80,0.45)"/><path d="M5.0,5.0 L5.0,17.0 A5.0,2.0 0 0,0 15.0,17.0 L15.0,5.0 A5.0,2.0 0 0,0 5.0,5.0Z" fill="url(#gBlue)" stroke="#16224a" stroke-width="0.9"/><ellipse cx="10" cy="5.0" rx="5.0" ry="2.0" fill="#8fb0ea" stroke="#16224a" stroke-width="0.9"/><path d="M11,14 A5,4.0 0 0,1 19.5,11.5" fill="none" stroke="#3f78d0" stroke-width="2.6"/><path d="M16.5,8.5 L22.5,8 L21.5,14.5Z" fill="#3f78d0"/><path d="M21,16 A5,4.0 0 0,1 12.5,18.5" fill="none" stroke="#6fa0e4" stroke-width="2.6"/><path d="M15.5,21.5 L9.5,22 L10.5,15.5Z" fill="#6fa0e4"/></svg><svg style="left:559px;top:3.5px" width="22" height="22" viewBox="0 0 24 24"><rect x="3" y="4" width="17" height="14" fill="#5a6478" stroke="#333" stroke-width="0.600"/><rect x="4.500" y="5.500" width="14" height="11" fill="#7a869c"/><g transform="translate(12,12) scale(1.25)"><path d="M-6,6 L3,-3" stroke="#4a7ad0" stroke-width="3" stroke-linecap="round"/><path d="M-6,6 L3,-3" stroke="#e8eefa" stroke-width="1.400" stroke-linecap="round"/><path d="M1,-6.500 a3.300,3.300 0 1,0 5,3.500 l-2.500,0.300 l-1.200,-1.800 l1,-2.300Z" fill="#e8eefa" stroke="#4a7ad0" stroke-width="0.600"/><path d="M6,6 L-3,-3" stroke="#4a7ad0" stroke-width="2.600" stroke-linecap="round"/><path d="M-3,-3 l-3,-1.500 l-0.800,-2 l1.500,0.300 l2.600,2Z" fill="#e8eefa" stroke="#4a7ad0" stroke-width="0.500"/><path d="M6,6 L1,1" stroke="#3c63b0" stroke-width="3.200" stroke-linecap="round"/></g></svg><svg style="left:601px;top:3.5px" width="22" height="22" viewBox="0 0 24 24"><polygon points="11,4.4 15.8,2 21.4,3.2 16.6,6.0" fill="#fafafa" stroke="#555" stroke-width="0.500"/><polygon points="11,4.4 16.6,6.0 16.6,12.0 11,10.4" fill="#f4f4f4" stroke="#555" stroke-width="0.500"/><polygon points="16.6,6.0 21.4,3.2 21.4,9.2 16.6,12.0" fill="#d8d8d8" stroke="#555" stroke-width="0.500"/><polygon points="2,4.55 7.1,2 13.05,3.275 7.949999999999999,6.25" fill="#d0d0d0" stroke="#555" stroke-width="0.500"/><polygon points="2,4.55 7.949999999999999,6.25 7.949999999999999,12.625 2,10.925" fill="#9a9a9a" stroke="#555" stroke-width="0.500"/><polygon points="7.949999999999999,6.25 13.05,3.275 13.05,9.65 7.949999999999999,12.625" fill="#6e6e6e" stroke="#555" stroke-width="0.500"/><path d="M1.5999999999999996,15.57 h2.9700000000000006 v-2.9700000000000006 h2.8600000000000003 v2.9700000000000006 h2.9700000000000006 v2.8600000000000003 h-2.9700000000000006 v2.9700000000000006 h-2.8600000000000003 v-2.9700000000000006 h-2.9700000000000006Z" fill="#4ad22a" stroke="#2a9a18" stroke-width="0.500"/><path d="M14,14.5 q4,-3 5,1 q0,3 -3.500,4.500" fill="none" stroke="#3b74d0" stroke-width="1.600"/><path d="M12.5,12.5 l0.500,4 l3.500,-1.500Z" fill="#3b74d0"/></svg><svg style="left:627px;top:3.5px" width="22" height="22" viewBox="0 0 24 24"><polygon points="11,4.4 15.8,2 21.4,3.2 16.6,6.0" fill="#fafafa" stroke="#555" stroke-width="0.500"/><polygon points="11,4.4 16.6,6.0 16.6,12.0 11,10.4" fill="#f4f4f4" stroke="#555" stroke-width="0.500"/><polygon points="16.6,6.0 21.4,3.2 21.4,9.2 16.6,12.0" fill="#d8d8d8" stroke="#555" stroke-width="0.500"/><polygon points="2,4.55 7.1,2 13.05,3.275 7.949999999999999,6.25" fill="#d0d0d0" stroke="#555" stroke-width="0.500"/><polygon points="2,4.55 7.949999999999999,6.25 7.949999999999999,12.625 2,10.925" fill="#9a9a9a" stroke="#555" stroke-width="0.500"/><polygon points="7.949999999999999,6.25 13.05,3.275 13.05,9.65 7.949999999999999,12.625" fill="#6e6e6e" stroke="#555" stroke-width="0.500"/><rect x="3" y="8" width="6" height="14" rx="2.500" fill="#1c1c1c"/><rect x="15" y="8" width="6" height="14" rx="2.500" fill="#1c1c1c"/><circle cx="6" cy="12" r="2.300" fill="#f8c010"/><circle cx="6" cy="18.500" r="2.300" fill="#18d818"/><circle cx="18" cy="12" r="2.300" fill="#f01818"/><circle cx="18" cy="18.500" r="2.300" fill="#f8c010"/></svg><svg style="left:653px;top:3.5px" width="22" height="22" viewBox="0 0 24 24"><polygon points="11,4.4 15.8,2 21.4,3.2 16.6,6.0" fill="#fafafa" stroke="#555" stroke-width="0.500"/><polygon points="11,4.4 16.6,6.0 16.6,12.0 11,10.4" fill="#f4f4f4" stroke="#555" stroke-width="0.500"/><polygon points="16.6,6.0 21.4,3.2 21.4,9.2 16.6,12.0" fill="#d8d8d8" stroke="#555" stroke-width="0.500"/><polygon points="2,4.55 7.1,2 13.05,3.275 7.949999999999999,6.25" fill="#d0d0d0" stroke="#555" stroke-width="0.500"/><polygon points="2,4.55 7.949999999999999,6.25 7.949999999999999,12.625 2,10.925" fill="#9a9a9a" stroke="#555" stroke-width="0.500"/><polygon points="7.949999999999999,6.25 13.05,3.275 13.05,9.65 7.949999999999999,12.625" fill="#6e6e6e" stroke="#555" stroke-width="0.500"/><path d="M4.5,14.5 A7.5,6.0 0 0,1 18.0,12.0" fill="none" stroke="#3ab828" stroke-width="3.4"/><path d="M15.0,9.0 L21.0,8.5 L20.0,15.0Z" fill="#3ab828"/><path d="M19.5,16.5 A7.5,6.0 0 0,1 6.0,19.0" fill="none" stroke="#e8d818" stroke-width="3.4"/><path d="M9.0,22.0 L3.0,22.5 L4.0,16.0Z" fill="#e8d818"/></svg><svg style="left:679px;top:3.5px" width="22" height="22" viewBox="0 0 24 24"><polygon points="11,4.4 15.8,2 21.4,3.2 16.6,6.0" fill="#fafafa" stroke="#555" stroke-width="0.500"/><polygon points="11,4.4 16.6,6.0 16.6,12.0 11,10.4" fill="#f4f4f4" stroke="#555" stroke-width="0.500"/><polygon points="16.6,6.0 21.4,3.2 21.4,9.2 16.6,12.0" fill="#d8d8d8" stroke="#555" stroke-width="0.500"/><polygon points="2,4.55 7.1,2 13.05,3.275 7.949999999999999,6.25" fill="#d0d0d0" stroke="#555" stroke-width="0.500"/><polygon points="2,4.55 7.949999999999999,6.25 7.949999999999999,12.625 2,10.925" fill="#9a9a9a" stroke="#555" stroke-width="0.500"/><polygon points="7.949999999999999,6.25 13.05,3.275 13.05,9.65 7.949999999999999,12.625" fill="#6e6e6e" stroke="#555" stroke-width="0.500"/><path d="M1.2000000000000002,13.765 h2.565 v-2.565 h2.4699999999999998 v2.565 h2.565 v2.4699999999999998 h-2.565 v2.565 h-2.4699999999999998 v-2.565 h-2.565Z" fill="#4ad22a" stroke="#2a9a18" stroke-width="0.500"/><path d="M8,22 L14,13" stroke="#222" stroke-width="1.300"/><rect x="13.2" y="19.265" width="7.6" height="2.4699999999999998" fill="#f2e010" stroke="#b8a800" stroke-width="0.500"/></svg><svg style="left:706px;top:3.5px" width="22" height="22" viewBox="0 0 24 24"><ellipse cx="16" cy="20.0" rx="7.0" ry="2.0" fill="rgba(60,60,80,0.45)"/><path d="M7.0,5.5 L7.0,18.5 A5.0,2.0 0 0,0 17.0,18.5 L17.0,5.5 A5.0,2.0 0 0,0 7.0,5.5Z" fill="url(#gBlue)" stroke="#16224a" stroke-width="1"/><ellipse cx="12" cy="5.5" rx="5.0" ry="2.0" fill="#7fa4e4" stroke="#16224a" stroke-width="1"/><path d="M12,8 v11" stroke="#0a1030" stroke-width="1.400" stroke-dasharray="2.500 1.500"/></svg><svg style="left:732px;top:3.5px" width="22" height="22" viewBox="0 0 24 24"><ellipse cx="16" cy="20.0" rx="7.0" ry="2.0" fill="rgba(60,60,80,0.45)"/><path d="M7.0,5.5 L7.0,18.5 A5.0,2.0 0 0,0 17.0,18.5 L17.0,5.5 A5.0,2.0 0 0,0 7.0,5.5Z" fill="#8f9fc8" stroke="#16224a" stroke-width="1"/><ellipse cx="12" cy="5.5" rx="5.0" ry="2.0" fill="#7fa4e4" stroke="#16224a" stroke-width="1"/><path d="M9.500,8 v11 M14,8 v11" stroke="#f4f0a0" stroke-width="1.600"/></svg><svg style="left:758px;top:3.5px" width="22" height="22" viewBox="0 0 24 24"><ellipse cx="15" cy="20.0" rx="7.0" ry="2.0" fill="rgba(60,60,80,0.45)"/><path d="M6.0,5.5 L6.0,18.5 A5.0,2.0 0 0,0 16.0,18.5 L16.0,5.5 A5.0,2.0 0 0,0 6.0,5.5Z" fill="url(#gPale)" stroke="#28dce8" stroke-width="1.2"/><ellipse cx="11" cy="5.5" rx="5.0" ry="2.0" fill="#eef4fc" stroke="#28dce8" stroke-width="1.2"/><path d="M8,13 l3.500,4.500 l6.500,-9.500" fill="none" stroke="#28a820" stroke-width="3"/><path d="M8,13 l3.500,4.500 l6.500,-9.500" fill="none" stroke="#58d838" stroke-width="1.400"/></svg><svg style="left:784px;top:3.5px" width="22" height="22" viewBox="0 0 24 24"><ellipse cx="6" cy="18.500" rx="6" ry="1.500" fill="rgba(60,60,80,0.5)"/><path d="M6.0,7.0 L6.0,19.0 A5.0,2.0 0 0,0 16.0,19.0 L16.0,7.0 A5.0,2.0 0 0,0 6.0,7.0Z" fill="url(#gPale)" stroke="#28dce8" stroke-width="1.2"/><ellipse cx="11" cy="7.0" rx="5.0" ry="2.0" fill="#eef4fc" stroke="#28dce8" stroke-width="1.2"/><rect x="14.500" y="2" width="6" height="6" fill="none" stroke="#e89030" stroke-width="1.400"/><rect x="16" y="3.500" width="3" height="3" fill="#e86030"/></svg><svg style="left:810px;top:3.5px" width="22" height="22" viewBox="0 0 24 24"><path d="M7.0,5.5 L7.0,18.5 A5.0,2.0 0 0,0 17.0,18.5 L17.0,5.5 A5.0,2.0 0 0,0 7.0,5.5Z" fill="#d4e4fa" stroke="#6aa4e8" stroke-width="1"/><ellipse cx="12" cy="5.5" rx="5.0" ry="2.0" fill="#d4e4fa" stroke="#6aa4e8" stroke-width="1"/><path d="M8,6 L11,20 M10,5 L15,20 M14,5 L9,20 M16,6 L13,20 M7.500,12 L16.500,11" stroke="#6aa4e8" stroke-width="0.700" fill="none"/></svg><svg style="left:836px;top:3.5px" width="22" height="22" viewBox="0 0 24 24"><polygon points="3,6.500 12,3 21,6.500 12,10" fill="#7aa8ec" stroke="#0c1a40" stroke-width="0.900"/><polygon points="3,6.500 12,10 12,21 5,14" fill="#2c5ab8" stroke="#0c1a40" stroke-width="0.900"/><polygon points="21,6.500 12,10 12,21 19,14" fill="#14306e" stroke="#0c1a40" stroke-width="0.900"/></svg><svg style="left:877px;top:3.5px" width="22" height="22" viewBox="0 0 24 24"><polygon points="11,13.7 16.4,11 21.799999999999997,13.25 16.4,15.95" fill="#b8b8b8" stroke="#333" stroke-width="0.500"/><polygon points="11,13.7 16.4,15.95 16.4,21.799999999999997 11,19.549999999999997" fill="#7c7c7c" stroke="#333" stroke-width="0.500"/><polygon points="16.4,15.95 21.799999999999997,13.25 21.799999999999997,19.1 16.4,21.799999999999997" fill="#4c4c4c" stroke="#333" stroke-width="0.500"/><path d="M9.4,12.7 L4.0,19.9" stroke="#9a9aa0" stroke-width="3" stroke-linecap="round"/><path d="M9.4,12.7 L4.0,19.9" stroke="#d8d8dc" stroke-width="1.200" stroke-linecap="round"/><circle cx="13" cy="8.5" r="6" fill="url(#gLens)" stroke="#8a8e98" stroke-width="1.600"/><polygon points="11,5.5 16,8.5 11,11.5" fill="#c8d8ec" stroke="#6a86b0" stroke-width="0.700"/><path d="M2,3.500 h5 M4.500,1 v5 M2,8 h5" stroke="#111" stroke-width="1.100"/></svg><svg style="left:903px;top:3.5px" width="22" height="22" viewBox="0 0 24 24"><polygon points="11,13.7 16.4,11 21.799999999999997,13.25 16.4,15.95" fill="#b8b8b8" stroke="#333" stroke-width="0.500"/><polygon points="11,13.7 16.4,15.95 16.4,21.799999999999997 11,19.549999999999997" fill="#7c7c7c" stroke="#333" stroke-width="0.500"/><polygon points="16.4,15.95 21.799999999999997,13.25 21.799999999999997,19.1 16.4,21.799999999999997" fill="#4c4c4c" stroke="#333" stroke-width="0.500"/><path d="M8.9,13.2 L3.5,20.4" stroke="#9a9aa0" stroke-width="3" stroke-linecap="round"/><path d="M8.9,13.2 L3.5,20.4" stroke="#d8d8dc" stroke-width="1.200" stroke-linecap="round"/><circle cx="12.5" cy="9" r="6" fill="url(#gLens)" stroke="#8a8e98" stroke-width="1.600"/><polygon points="10.5,6 15.5,9 10.5,12" fill="#c8d8ec" stroke="#6a86b0" stroke-width="0.700"/><path d="M0.7999999999999998,0.7999999999999998 L5.2,5.2 M5.2,0.7999999999999998 L0.7999999999999998,5.2" stroke="#35c020" stroke-width="1.500"/><rect x="1.7" y="1.7" width="2.600" height="2.600" fill="#35c020"/><path d="M18.8,0.7999999999999998 L23.2,5.2 M23.2,0.7999999999999998 L18.8,5.2" stroke="#35c020" stroke-width="1.500"/><rect x="19.7" y="1.7" width="2.600" height="2.600" fill="#35c020"/><path d="M0.7999999999999998,18.8 L5.2,23.2 M5.2,18.8 L0.7999999999999998,23.2" stroke="#35c020" stroke-width="1.500"/><rect x="1.7" y="19.7" width="2.600" height="2.600" fill="#35c020"/><path d="M18.8,18.8 L23.2,23.2 M23.2,18.8 L18.8,23.2" stroke="#35c020" stroke-width="1.500"/><rect x="19.7" y="19.7" width="2.600" height="2.600" fill="#35c020"/></svg><svg style="left:929px;top:3.5px" width="22" height="22" viewBox="0 0 24 24"><rect x="3.500" y="4.500" width="17" height="15" fill="url(#gDoc)" stroke="#222" stroke-width="1"/><path d="M1.2999999999999998,2.3 L5.7,6.7 M5.7,2.3 L1.2999999999999998,6.7" stroke="#35c020" stroke-width="1.500"/><rect x="2.2" y="3.2" width="2.600" height="2.600" fill="#35c020"/><path d="M18.3,2.3 L22.7,6.7 M22.7,2.3 L18.3,6.7" stroke="#35c020" stroke-width="1.500"/><rect x="19.2" y="3.2" width="2.600" height="2.600" fill="#35c020"/><path d="M1.2999999999999998,17.3 L5.7,21.7 M5.7,17.3 L1.2999999999999998,21.7" stroke="#35c020" stroke-width="1.500"/><rect x="2.2" y="18.2" width="2.600" height="2.600" fill="#35c020"/><path d="M18.3,17.3 L22.7,21.7 M22.7,17.3 L18.3,21.7" stroke="#35c020" stroke-width="1.500"/><rect x="19.2" y="18.2" width="2.600" height="2.600" fill="#35c020"/><text x="12" y="16" text-anchor="middle" font-family="'Liberation Sans',sans-serif" font-size="9.500" font-weight="bold" fill="#101060">1:1</text></svg><svg style="left:956px;top:3.5px" width="22" height="22" viewBox="0 0 24 24"><path d="M6,18 L17,7" stroke="#1e7a18" stroke-width="3"/><path d="M6,18 L17,7" stroke="#48d030" stroke-width="1.500"/><polygon points="21,3 12.500,5.500 18.500,11.500" fill="#38c028" stroke="#1e7a18" stroke-width="0.700"/><circle cx="6" cy="18.500" r="3.200" fill="#c8c8c8" stroke="#444" stroke-width="0.700"/><circle cx="5" cy="17.500" r="1.200" fill="#fff"/></svg><svg style="left:982px;top:3.5px" width="22" height="22" viewBox="0 0 24 24"><path d="M4.500,13 A7.500,8 0 0,1 17,5.500" fill="none" stroke="#2aa020" stroke-width="3.200"/><polygon points="14,2 21,5.500 15.500,10.500" fill="#2aa020"/><path d="M19.500,11 A7.500,8 0 0,1 7,18.500" fill="none" stroke="#2aa020" stroke-width="3.200"/><polygon points="10,22 3,18.500 8.500,13.500" fill="#2aa020"/><path d="M5,12.500 A7,7.500 0 0,1 16.500,5.800 M19,11.500 A7,7.500 0 0,1 7.500,18.200" fill="none" stroke="#68e048" stroke-width="1.200"/></svg><svg style="left:1008px;top:3.5px" width="22" height="22" viewBox="0 0 24 24"><g transform="translate(12,6) scale(1.05)"><path d="M-10.500,2.500 Q-5,-6.500 3.500,-6 Q9.500,-5 10.500,1 Q4,-2 -2,-1 Q-7,0 -10.500,2.500Z" fill="#3c4262"/><path d="M-10,3 Q-3,-3.500 4,-3 Q8.500,-2.500 10,1.500 Q5,4.500 0,4.500 Q-6,4.500 -10,3Z" fill="#aab3d0" stroke="#5a6080" stroke-width="0.500"/><ellipse cx="0.500" cy="0.600" rx="5.400" ry="3.900" fill="url(#gEye)"/><circle cx="0.500" cy="0.800" r="1.700" fill="#0c1226"/><circle cx="-1" cy="-0.800" r="0.900" fill="#fff"/><path d="M-9.500,-0.500 L-11,-2.500 M-6.500,-3.500 L-8,-6 M-2.500,-5.500 L-3.200,-8 M1.500,-5.800 L1.800,-8.200 M5.500,-5 L6.800,-7.300 M8.500,-3 L10.500,-4.800" stroke="#3c4262" stroke-width="0.900" fill="none"/><path d="M-9,4.200 Q0,6.500 9.500,2.500" fill="none" stroke="#b08a90" stroke-width="0.700"/></g><circle cx="12" cy="15.500" r="6.500" fill="#f8d038" stroke="#c89818" stroke-width="0.700"/><circle cx="10" cy="13.500" r="1" fill="#222"/><circle cx="14.500" cy="13.500" r="1" fill="#222"/><path d="M8.500,16.500 q3.500,4 7.500,0" fill="none" stroke="#7a4a10" stroke-width="1"/></svg><svg style="left:1051px;top:3.5px" width="22" height="22" viewBox="0 0 24 24"><g transform="translate(12,13) scale(1.0)"><polygon points="-9,1 2,-5 10,0 -1,7" fill="#e4ecf8" stroke="#a8b8d8" stroke-width="0.600"/><path d="M-3,2 L-3,-8" stroke="#1a5fe0" stroke-width="1.800"/><polygon points="-3,-11 -5.500,-6.500 -0.500,-6.500" fill="#1a5fe0"/><path d="M-3,2 L4,-2" stroke="#22b830" stroke-width="1.800"/><polygon points="7,-3.800 2.300,-4 4.500,0.300" fill="#22b830"/><path d="M-3,2 L3,6" stroke="#e02020" stroke-width="1.800"/><polygon points="6,8 1.300,7.300 4,3.500" fill="#e02020"/><circle cx="-3" cy="2" r="1.800" fill="#eee" stroke="#666" stroke-width="0.500"/></g></svg><svg style="left:1077px;top:3.5px" width="22" height="22" viewBox="0 0 24 24"><polygon points="12,7 20,4 23,8 15,11" fill="#e4ecf8" stroke="#a8b8d8" stroke-width="0.600"/><path d="M15,8 v-6" stroke="#1a5fe0" stroke-width="1.300"/><path d="M15,8 l5,-2" stroke="#22b830" stroke-width="1.300"/><path d="M15,8 l4,2.500" stroke="#e02020" stroke-width="1.300"/><path d="M4,19 L12,9" stroke="#1e7a18" stroke-width="4"/><path d="M4,19 L12,9" stroke="#48d030" stroke-width="2"/><polygon points="15,5 6.500,9 13,14.500" fill="#38c028" stroke="#1e7a18" stroke-width="0.700"/><path d="M13,19.500 h8 v-5" fill="none" stroke="#888" stroke-width="1.600"/><circle cx="5" cy="20" r="2" fill="#bbb" stroke="#555" stroke-width="0.500"/></svg><svg style="left:1103px;top:3.5px" width="22" height="22" viewBox="0 0 24 24"><polygon points="12,6 20,3 23,7 15,10" fill="#e4ecf8" stroke="#a8b8d8" stroke-width="0.600"/><path d="M16,8 v-6" stroke="#1a5fe0" stroke-width="1.300"/><path d="M16,8 l5,-2.500" stroke="#22b830" stroke-width="1.300"/><path d="M16,8 l4,2" stroke="#e02020" stroke-width="1.300"/><path d="M5,10 L13,19" stroke="#1e7a18" stroke-width="4"/><path d="M5,10 L13,19" stroke="#48d030" stroke-width="2"/><polygon points="2,6.500 3,14 9.500,8.500" fill="#38c028" stroke="#1e7a18" stroke-width="0.600"/><polygon points="16,22.500 15,15 8.500,20.500" fill="#38c028" stroke="#1e7a18" stroke-width="0.600"/></svg><svg style="left:1146px;top:3.5px" width="22" height="22" viewBox="0 0 24 24"><rect x="2.500" y="2.500" width="19" height="19" fill="#555"/><rect x="3" y="3" width="5.600" height="5.600" fill="#18c8f0"/><rect x="9.2" y="3" width="5.600" height="5.600" fill="#f8d010"/><rect x="15.4" y="3" width="5.600" height="5.600" fill="#18d018"/><rect x="3" y="9.2" width="5.600" height="5.600" fill="#f08010"/><rect x="9.2" y="9.2" width="5.600" height="5.600" fill="#a86800"/><rect x="15.4" y="9.2" width="5.600" height="5.600" fill="#f010e0"/><rect x="3" y="15.4" width="5.600" height="5.600" fill="#1018e0"/><rect x="9.2" y="15.4" width="5.600" height="5.600" fill="#10a818"/><rect x="15.4" y="15.4" width="5.600" height="5.600" fill="#8a8a8a"/></svg><svg style="left:1172px;top:3.5px" width="22" height="22" viewBox="0 0 24 24"><rect x="4" y="2" width="16" height="20" fill="#f4f4f8" stroke="#5a6a9a" stroke-width="1"/><rect x="4.500" y="2.500" width="15" height="3" fill="#f0c060"/><path d="M6,8 h5 M13,8 h5" stroke="#f0a040" stroke-width="1.200"/><rect x="7" y="10.5" width="3.100" height="3.100" fill="#18c8f0"/><rect x="10.5" y="10.5" width="3.100" height="3.100" fill="#f8d010"/><rect x="14" y="10.5" width="3.100" height="3.100" fill="#18d018"/><rect x="7" y="14" width="3.100" height="3.100" fill="#f08010"/><rect x="10.5" y="14" width="3.100" height="3.100" fill="#a86800"/><rect x="14" y="14" width="3.100" height="3.100" fill="#f010e0"/><rect x="7" y="17.5" width="3.100" height="3.100" fill="#1018e0"/><rect x="10.5" y="17.5" width="3.100" height="3.100" fill="#10a818"/><rect x="14" y="17.5" width="3.100" height="3.100" fill="#8a8a8a"/></svg><svg style="left:1198px;top:3.5px" width="22" height="22" viewBox="0 0 24 24"><circle cx="12" cy="12" r="10.500" fill="#5a8a28" stroke="#3a5a18" stroke-width="0.800"/><circle cx="12" cy="12" r="8.500" fill="#7aa838"/><ellipse cx="12" cy="19" rx="3.500" ry="2.500" fill="#c8c8c8"/><g transform="translate(12,11.5) scale(1.15)"><path d="M-6,6 L3,-3" stroke="#8a8a8a" stroke-width="3" stroke-linecap="round"/><path d="M-6,6 L3,-3" stroke="#f0f0f0" stroke-width="1.400" stroke-linecap="round"/><path d="M1,-6.500 a3.300,3.300 0 1,0 5,3.500 l-2.500,0.300 l-1.200,-1.800 l1,-2.300Z" fill="#f0f0f0" stroke="#8a8a8a" stroke-width="0.600"/><path d="M6,6 L-3,-3" stroke="#8a8a8a" stroke-width="2.600" stroke-linecap="round"/><path d="M-3,-3 l-3,-1.500 l-0.800,-2 l1.500,0.300 l2.600,2Z" fill="#f0f0f0" stroke="#8a8a8a" stroke-width="0.500"/><path d="M6,6 L1,1" stroke="#3c63b0" stroke-width="3.200" stroke-linecap="round"/></g></svg><svg style="left:1224px;top:3.5px" width="22" height="22" viewBox="0 0 24 24"><rect x="2.500" y="2.500" width="19" height="19" fill="#dfe8f8" stroke="#2a4a8a" stroke-width="1"/><rect x="3" y="3" width="18" height="3" fill="#3868c0"/><path d="M5,8.500 v6 M8,8.500 v6 M11,8.500 v3" stroke="#a87830" stroke-width="1.500" stroke-dasharray="1.500 1"/><g transform="translate(14,15) scale(0.9)"><path d="M-6,6 L3,-3" stroke="#4a6ab0" stroke-width="3" stroke-linecap="round"/><path d="M-6,6 L3,-3" stroke="#c8d4ec" stroke-width="1.400" stroke-linecap="round"/><path d="M1,-6.500 a3.300,3.300 0 1,0 5,3.500 l-2.500,0.300 l-1.200,-1.800 l1,-2.300Z" fill="#c8d4ec" stroke="#4a6ab0" stroke-width="0.600"/><path d="M6,6 L-3,-3" stroke="#4a6ab0" stroke-width="2.600" stroke-linecap="round"/><path d="M-3,-3 l-3,-1.500 l-0.800,-2 l1.500,0.300 l2.600,2Z" fill="#c8d4ec" stroke="#4a6ab0" stroke-width="0.500"/><path d="M6,6 L1,1" stroke="#3c63b0" stroke-width="3.200" stroke-linecap="round"/></g></svg><svg style="left:1250px;top:3.5px" width="22" height="22" viewBox="0 0 24 24"><rect x="3.500" y="3.500" width="17" height="17" fill="none" stroke="#1a3a8a" stroke-width="1.400" stroke-dasharray="1.500 2"/><path d="M7,12 L14,6 L22,5 L22,11 L16,14 L11,15Z" fill="#e8b078" stroke="#9a6a38" stroke-width="0.700"/><path d="M15,6 L22,5 L22,8Z" fill="#c88848"/><circle cx="8.500" cy="16.500" r="3.500" fill="#f8e850" stroke="#c8a818" stroke-width="0.600"/><path d="M8.500,13.500 v6 M5.500,16.500 h6" stroke="#2858d0" stroke-width="1.300"/></svg><svg style="left:1277px;top:3.5px" width="22" height="22" viewBox="0 0 24 24"><polygon points="7,4 22,2.500 17,19 2,20.500" fill="#e88888" stroke="#2858c8" stroke-width="1.600"/><path d="M10.500,3.800 L5.500,20 M14.500,3.300 L9.500,19.700 M18.500,3 L13.500,19.300 M5.800,8 L20.800,6.500 M4.500,12 L19.500,10.500 M3.300,16 L18.300,14.500" stroke="#f8e8e8" stroke-width="0.800"/></svg>
</div>
<div id="lstrip" class="abs"></div><div id="lstrip2" class="abs"></div>
<div id="left" class="abs"><div class="hgrip" style="top:3px"></div><div class="hgrip" style="top:256px"></div><svg style="left:6px;top:14.5px" width="22" height="22" viewBox="0 0 24 24"><ellipse cx="12" cy="21" rx="7" ry="1.500" fill="rgba(80,80,100,0.3)"/><path d="M2,9 q4,-3 8,-1 M2,13 q3,0 6,2" stroke="#a8b8d0" stroke-width="1.200" fill="none"/><path d="M10.4,14.2 L5.0,21.4" stroke="#9a9aa0" stroke-width="3" stroke-linecap="round"/><path d="M10.4,14.2 L5.0,21.4" stroke="#d8d8dc" stroke-width="1.200" stroke-linecap="round"/><circle cx="14" cy="10" r="6" fill="url(#gLens)" stroke="#8a8e98" stroke-width="1.600"/></svg><svg style="left:32.5px;top:14.5px" width="22" height="22" viewBox="0 0 24 24"><path d="M4,4 L20,19 M4,12 L16,4" stroke="#2a5ac8" stroke-width="1.600" fill="none"/><g transform="translate(13,12)"><path d="M-6,7 L5,-6" stroke="#e8a040" stroke-width="3.400"/><path d="M-6,7 L5,-6" stroke="#f8d070" stroke-width="1.200"/><polygon points="-8,9.500 -7.300,5.500 -4.200,8.200" fill="#f0d8b0" stroke="#8a6a30" stroke-width="0.400"/><polygon points="-8,9.500 -7.700,7.800 -6.400,8.900" fill="#222"/><path d="M3.800,-7 L6.300,-4.800" stroke="#d02020" stroke-width="3.400"/><path d="M5.500,-8.800 L8,-6.600" stroke="#888" stroke-width="3"/></g></svg><svg style="left:6px;top:40.5px" width="22" height="22" viewBox="0 0 24 24"><rect x="4" y="5" width="16" height="14" fill="url(#gDoc)" stroke="#222" stroke-width="1"/><path d="M1.7999999999999998,2.8 L6.2,7.2 M6.2,2.8 L1.7999999999999998,7.2" stroke="#35c020" stroke-width="1.500"/><rect x="2.7" y="3.7" width="2.600" height="2.600" fill="#35c020"/><path d="M17.8,2.8 L22.2,7.2 M22.2,2.8 L17.8,7.2" stroke="#35c020" stroke-width="1.500"/><rect x="18.7" y="3.7" width="2.600" height="2.600" fill="#35c020"/><path d="M1.7999999999999998,16.8 L6.2,21.2 M6.2,16.8 L1.7999999999999998,21.2" stroke="#35c020" stroke-width="1.500"/><rect x="2.7" y="17.7" width="2.600" height="2.600" fill="#35c020"/><path d="M17.8,16.8 L22.2,21.2 M22.2,16.8 L17.8,21.2" stroke="#35c020" stroke-width="1.500"/><rect x="18.7" y="17.7" width="2.600" height="2.600" fill="#35c020"/></svg><svg style="left:32.5px;top:40.5px" width="22" height="22" viewBox="0 0 24 24"><path d="M4,8 q2,-5 7,-2 q4,3 7,9 q-2,5 -6,2 q-3,-3 -8,-9Z" stroke="#2a6ac8" stroke-width="1.700" fill="none"/><g transform="translate(13,11)"><path d="M-6,7 L5,-6" stroke="#e8a040" stroke-width="3.400"/><path d="M-6,7 L5,-6" stroke="#f8d070" stroke-width="1.200"/><polygon points="-8,9.500 -7.300,5.500 -4.200,8.200" fill="#f0d8b0" stroke="#8a6a30" stroke-width="0.400"/><polygon points="-8,9.500 -7.700,7.800 -6.400,8.900" fill="#222"/><path d="M3.800,-7 L6.300,-4.800" stroke="#d02020" stroke-width="3.400"/><path d="M5.500,-8.800 L8,-6.600" stroke="#888" stroke-width="3"/></g></svg><svg style="left:6px;top:66.5px" width="22" height="22" viewBox="0 0 24 24"><polygon points="11,13.7 16.4,11 21.799999999999997,13.25 16.4,15.95" fill="#b8b8b8" stroke="#333" stroke-width="0.500"/><polygon points="11,13.7 16.4,15.95 16.4,21.799999999999997 11,19.549999999999997" fill="#7c7c7c" stroke="#333" stroke-width="0.500"/><polygon points="16.4,15.95 21.799999999999997,13.25 21.799999999999997,19.1 16.4,21.799999999999997" fill="#4c4c4c" stroke="#333" stroke-width="0.500"/><path d="M9.4,12.7 L4.0,19.9" stroke="#9a9aa0" stroke-width="3" stroke-linecap="round"/><path d="M9.4,12.7 L4.0,19.9" stroke="#d8d8dc" stroke-width="1.200" stroke-linecap="round"/><circle cx="13" cy="8.5" r="6" fill="url(#gLens)" stroke="#8a8e98" stroke-width="1.600"/><polygon points="11,5.5 16,8.5 11,11.5" fill="#c8d8ec" stroke="#6a86b0" stroke-width="0.700"/><path d="M2,3.500 h5 M4.500,1 v5 M2,8 h5" stroke="#111" stroke-width="1.100"/></svg><svg style="left:32.5px;top:66.5px" width="22" height="22" viewBox="0 0 24 24"><path d="M4,5 h13 v10 h3 v5 h-16Z" fill="#f4f8e8" stroke="#e8d818" stroke-width="1.800"/><path d="M7,12 l3.500,4.500 l6.500,-9" fill="none" stroke="#28a020" stroke-width="3.200"/><path d="M7,12 l3.500,4.500 l6.500,-9" fill="none" stroke="#58d838" stroke-width="1.300"/></svg><svg style="left:21.5px;top:66.5px" width="6" height="4" viewBox="0 0 6 4"><polygon points="0.5,0 5.5,0 3,3" fill="#000"/></svg><svg style="left:6px;top:92.5px" width="22" height="22" viewBox="0 0 24 24"><g transform="translate(12,13) scale(1.0)"><polygon points="-9,1 2,-5 10,0 -1,7" fill="#e4ecf8" stroke="#a8b8d8" stroke-width="0.600"/><path d="M-3,2 L-3,-8" stroke="#1a5fe0" stroke-width="1.800"/><polygon points="-3,-11 -5.500,-6.500 -0.500,-6.500" fill="#1a5fe0"/><path d="M-3,2 L4,-2" stroke="#22b830" stroke-width="1.800"/><polygon points="7,-3.800 2.300,-4 4.500,0.300" fill="#22b830"/><path d="M-3,2 L3,6" stroke="#e02020" stroke-width="1.800"/><polygon points="6,8 1.300,7.300 4,3.500" fill="#e02020"/><circle cx="-3" cy="2" r="1.800" fill="#eee" stroke="#666" stroke-width="0.500"/></g></svg><svg style="left:32.5px;top:92.5px" width="22" height="22" viewBox="0 0 24 24"><path d="M3,8 q4,-6 7,2 q3,10 7,6 q2,-2 3,-4 M3,17 q4,4 7,-2 q3,-8 9,-7" stroke="#2a5ac8" stroke-width="1.700" fill="none"/><g transform="translate(13,11)"><path d="M-6,7 L5,-6" stroke="#e8a040" stroke-width="3.400"/><path d="M-6,7 L5,-6" stroke="#f8d070" stroke-width="1.200"/><polygon points="-8,9.500 -7.300,5.500 -4.200,8.200" fill="#f0d8b0" stroke="#8a6a30" stroke-width="0.400"/><polygon points="-8,9.500 -7.700,7.800 -6.400,8.900" fill="#222"/><path d="M3.800,-7 L6.300,-4.800" stroke="#d02020" stroke-width="3.400"/><path d="M5.500,-8.800 L8,-6.600" stroke="#888" stroke-width="3"/></g></svg><svg style="left:21.5px;top:92.5px" width="6" height="4" viewBox="0 0 6 4"><polygon points="0.5,0 5.5,0 3,3" fill="#000"/></svg><svg style="left:6px;top:118px" width="22" height="22" viewBox="0 0 24 24"><path d="M3,3.500 h12 l-1.500,2 h-12Z" fill="#6b86e0"/><path d="M3,6.500 h12 l-1.500,2 h-12Z" fill="#a8b4e8"/><path d="M3,9.500 h12 l-1.500,2 h-12Z" fill="#d8d8e0" stroke="#999" stroke-width="0.300"/><ellipse cx="11" cy="17" rx="8" ry="5" fill="#c89868" stroke="#7a5230" stroke-width="0.700"/><ellipse cx="12" cy="22" rx="7" ry="1.300" fill="rgba(80,80,90,0.35)"/><circle cx="7" cy="17.500" r="1.800" fill="#2050e0"/><circle cx="11" cy="19" r="1.800" fill="#20b030"/><circle cx="15" cy="17" r="1.800" fill="#e02020"/><circle cx="10" cy="14.500" r="1.300" fill="#f0e020"/><path d="M20.500,2 L12,14" stroke="#b86a28" stroke-width="1.800"/><path d="M13,12.500 L11,16" stroke="#444" stroke-width="2"/></svg><svg style="left:32.5px;top:118px" width="22" height="22" viewBox="0 0 24 24"><polygon points="7,5 21,3 17,19 3,21" fill="#6a9ae8" stroke="#2858c8" stroke-width="1.200"/><path d="M14,4 L10,20 M5.500,11 L19.500,9.500 M4.500,15.500 L18.500,14" stroke="#dfe8fa" stroke-width="1.200"/></svg><svg style="left:21.5px;top:118px" width="6" height="4" viewBox="0 0 6 4"><polygon points="0.5,0 5.5,0 3,3" fill="#000"/></svg><svg style="left:6px;top:144px" width="22" height="22" viewBox="0 0 24 24"><ellipse cx="12" cy="21.500" rx="7" ry="1.300" fill="rgba(80,90,110,0.3)"/><path d="M4.5,10.5 A7.5,6.0 0 0,1 18.0,8.0" fill="none" stroke="#4f86d4" stroke-width="4"/><path d="M15.0,5.0 L21.0,4.5 L20.0,11.0Z" fill="#4f86d4"/><path d="M19.5,12.5 A7.5,6.0 0 0,1 6.0,15.0" fill="none" stroke="#8db6ea" stroke-width="4"/><path d="M9.0,18.0 L3.0,18.5 L4.0,12.0Z" fill="#8db6ea"/></svg><svg style="left:32.5px;top:144px" width="22" height="22" viewBox="0 0 24 24"><ellipse cx="13" cy="21" rx="8" ry="1.800" fill="rgba(60,60,70,0.4)"/><polygon points="3,7.5 12.0,3 21.0,6.75 12.0,11.25" fill="#b8b8b8" stroke="#333" stroke-width="0.500"/><polygon points="3,7.5 12.0,11.25 12.0,21.0 3,17.25" fill="#7c7c7c" stroke="#333" stroke-width="0.500"/><polygon points="12.0,11.25 21.0,6.75 21.0,16.5 12.0,21.0" fill="#4c4c4c" stroke="#333" stroke-width="0.500"/></svg><svg style="left:21.5px;top:144px" width="6" height="4" viewBox="0 0 6 4"><polygon points="0.5,0 5.5,0 3,3" fill="#000"/></svg><svg style="left:6px;top:170px" width="22" height="22" viewBox="0 0 24 24"><ellipse cx="12" cy="22" rx="6" ry="1.500" fill="rgba(60,60,90,0.35)"/><text x="12" y="19" text-anchor="middle" font-family="'Liberation Sans',sans-serif" font-size="22" font-weight="bold" fill="#3f72c4" stroke="#2a4a90" stroke-width="0.500">?</text></svg><svg style="left:32.5px;top:170px" width="22" height="22" viewBox="0 0 24 24"><path d="M4,4 v17 M20,4 v17" stroke="#222" stroke-width="1.300"/><path d="M5,9 h14" stroke="#e8d818" stroke-width="2"/><polygon points="4.500,9 8,6.800 8,11.200" fill="#e8d818" stroke="#8a7a00" stroke-width="0.400"/><polygon points="19.500,9 16,6.800 16,11.200" fill="#e8d818" stroke="#8a7a00" stroke-width="0.400"/></svg><svg style="left:21.5px;top:170px" width="6" height="4" viewBox="0 0 6 4"><polygon points="0.5,0 5.5,0 3,3" fill="#000"/></svg><svg style="left:6px;top:196px" width="22" height="22" viewBox="0 0 24 24"><path d="M5,7 h14 l-2,14 h-10Z" fill="#b8e0f0" stroke="#4a7a9a" stroke-width="0.900"/><ellipse cx="12" cy="7" rx="7" ry="2" fill="#d8f0fa" stroke="#4a7a9a" stroke-width="0.800"/><path d="M9,10 l1,9 M12,10 v9 M15,10 l-1,9" stroke="#7ab0c8" stroke-width="0.800"/><path d="M9,6 l2,-4 l3,1 l1,3" fill="#f0e040" stroke="#222" stroke-width="0.600"/></svg><svg style="left:32.5px;top:196px" width="22" height="22" viewBox="0 0 24 24"><g ><ellipse cx="13" cy="21" rx="8" ry="1.800" fill="rgba(90,90,100,0.35)"/><path d="M2.500,8.500 L10.500,2 L10.500,5.800 C17,5.500 20.500,10 19.500,14.500 C18.800,17.500 16.500,19 13,19.500 C15.500,17 16.200,14.500 15,12.500 C14,11 12.500,10.800 10.500,11 L10.500,15Z" fill="url(#gGrayA)" stroke="#7a7a7a" stroke-width="0.600"/></g></svg><svg style="left:21.5px;top:196px" width="6" height="4" viewBox="0 0 6 4"><polygon points="0.5,0 5.5,0 3,3" fill="#000"/></svg><svg style="left:6px;top:222px" width="22" height="22" viewBox="0 0 24 24"><path d="M3,2 v18 M6,2 v18" stroke="#555" stroke-width="1.600"/><path d="M2,18 l20,2 M2,21 l18,-4 M4,22 l14,1" stroke="#f08818" stroke-width="1.600"/><circle cx="14" cy="12" r="6.500" fill="none" stroke="#8a4a18" stroke-width="1.600"/><path d="M14,3 v18 M5,12 h18 M7.500,5.500 l13,13 M20.500,5.500 l-13,13" stroke="#8a4a18" stroke-width="1.100"/><circle cx="14" cy="12" r="2" fill="#f0a030"/></svg><svg style="left:32.5px;top:222px" width="22" height="22" viewBox="0 0 24 24"><path d="M9,9 h9 l3,3 v9 h-12Z" fill="url(#gDoc)" stroke="#111" stroke-width="1.200"/><path d="M2,6 l2,-2 h5 l1.500,1.500 h7 v4 h-15.500Z" fill="#f0d070" stroke="#b88a28" stroke-width="0.600"/><path d="M1.500,17 L3,8 h15 L16,17Z" fill="url(#gFold)" stroke="#b88a28" stroke-width="0.700"/><path d="M10,5 h7 v3 h-7Z" fill="#38b828"/></svg><svg style="left:21.5px;top:222px" width="6" height="4" viewBox="0 0 6 4"><polygon points="0.5,0 5.5,0 3,3" fill="#000"/></svg><svg style="left:48px;top:14.5px" width="6" height="4" viewBox="0 0 6 4"><polygon points="0.5,0 5.5,0 3,3" fill="#000"/></svg><svg style="left:48px;top:40.5px" width="6" height="4" viewBox="0 0 6 4"><polygon points="0.5,0 5.5,0 3,3" fill="#000"/></svg><svg style="left:48px;top:66.5px" width="6" height="4" viewBox="0 0 6 4"><polygon points="0.5,0 5.5,0 3,3" fill="#000"/></svg><svg style="left:48px;top:92.5px" width="6" height="4" viewBox="0 0 6 4"><polygon points="0.5,0 5.5,0 3,3" fill="#000"/></svg><svg style="left:48px;top:118px" width="6" height="4" viewBox="0 0 6 4"><polygon points="0.5,0 5.5,0 3,3" fill="#000"/></svg><svg style="left:48px;top:144px" width="6" height="4" viewBox="0 0 6 4"><polygon points="0.5,0 5.5,0 3,3" fill="#000"/></svg><svg style="left:48px;top:170px" width="6" height="4" viewBox="0 0 6 4"><polygon points="0.5,0 5.5,0 3,3" fill="#000"/></svg><svg style="left:48px;top:196px" width="6" height="4" viewBox="0 0 6 4"><polygon points="0.5,0 5.5,0 3,3" fill="#000"/></svg></div>
<svg shape-rendering="crispEdges" style="left:60px;top:109px;overflow:hidden" width="1860" height="892" viewBox="60 109 1860 892"><defs>
<linearGradient id="bg" x1="0" y1="0" x2="0" y2="1"><stop offset="0" stop-color="#02031a"/><stop offset="0.5" stop-color="#233259"/><stop offset="1" stop-color="#4a6790"/></linearGradient>
<linearGradient id="cyl" x1="0" y1="0" x2="1" y2="0"><stop offset="0" stop-color="#bbb"/><stop offset="0.35" stop-color="#fff"/><stop offset="1" stop-color="#999"/></linearGradient>
<linearGradient id="gcyl" x1="0" y1="0" x2="0" y2="1"><stop offset="0" stop-color="#37a03b"/><stop offset="1" stop-color="#1f6a23"/></linearGradient>
<linearGradient id="corner" x1="0" y1="0" x2="1" y2="0"><stop offset="0" stop-color="#a9b1a9"/><stop offset="1" stop-color="#6d746d"/></linearGradient>
<linearGradient id="wheel" x1="0" y1="0" x2="1" y2="0"><stop offset="0" stop-color="#2f8232"/><stop offset="1" stop-color="#14441a"/></linearGradient>
<linearGradient id="redk" x1="0" y1="0" x2="1" y2="1"><stop offset="0" stop-color="#d81414"/><stop offset="1" stop-color="#8a0808"/></linearGradient>
</defs>
<rect x="60" y="109" width="1860" height="892" fill="url(#bg)"/>
<polygon points="686,109 723,109 721,121 688,124" fill="url(#cyl)" stroke="#000" stroke-width="1.3" />
<polygon points="688,124 721,120 720,124 689,128" fill="#2c8a30" stroke="#000" stroke-width="1.3" />
<polygon points="689,128 720,123 699,160 693,160" fill="#c41111" stroke="#000" stroke-width="1.3" />
<polyline points="691,150 706,147" fill="none" stroke="#700" stroke-width="1.3" />
<polyline points="696.5,165 700,192" fill="none" stroke="#f0801a" stroke-width="3.5" />
<polyline points="700.3,193 701,197" fill="none" stroke="#2d6b2d" stroke-width="3.5" />
<polyline points="701.5,198 705,226" fill="none" stroke="#17c04a" stroke-width="3.5" />
<polyline points="705.3,228 707.5,242" fill="none" stroke="#eee" stroke-width="3.5" />
<polygon points="697,161 722,119 775,109 917,109 910,120 928,234 765,250 757,250 712,259" fill="#919b91" stroke="#000" stroke-width="1.3" />
<polygon points="697,161 722,119 775,109 917,109 910,120" fill="#959f95" stroke="#000" stroke-width="1.3" />
<polyline points="698,163 911,122" fill="none" stroke="#000" stroke-width="1.3" />
<polyline points="907,121 925,234" fill="none" stroke="#000" stroke-width="1.3" stroke-dasharray="4 1.5"/>
<polyline points="911,121 929,234" fill="none" stroke="#000" stroke-width="1.3" />
<polygon points="928,216 952,212 957,216 956,221 930,222" fill="#8c8c90" stroke="#000" stroke-width="1.3" />
<polygon points="947,221 956,220 966,230 950,232" fill="#9a9aa0" stroke="#000" stroke-width="1.3" />
<polygon points="948,222 952,222 952,231 948,232" fill="#eee" stroke="none" stroke-width="1.3" />
<circle cx="954" cy="215.500" r="2.200" fill="#222"/>
<circle cx="946" cy="212" r="2" fill="#eee" stroke="#000" stroke-width="1.3"/>
<polygon points="852,240 878,235 879,238 853,243" fill="#ddd" stroke="#000" stroke-width="1.3" />
<polygon points="427,320 757,250 816,658 485,725" fill="#919b91" stroke="#000" stroke-width="1.3" />
<polyline points="429,323 757,253" fill="none" stroke="#000" stroke-width="1.3" />
<polygon points="757,250 764,251 822,657 816,658" fill="url(#corner)" stroke="#000" stroke-width="1.3" />
<polygon points="764,251 1067,222.5 1102.5,260 1157.5,625 822,657" fill="#525650" stroke="#000" stroke-width="1.3" />
<polygon points="764,251 1067,222.5 1070,225.5 765,254" fill="#6b6f69" stroke="#000" stroke-width="1.3" />
<polyline points="1070,225.5 1102.5,260" fill="none" stroke="#777" stroke-width="1.5" />
<polygon points="484,392 724,343 759.5,582.5 519,632.5" fill="none" stroke="#000" stroke-width="1.3" />
<polyline points="727,345 762,582" fill="none" stroke="#000" stroke-width="1.3" stroke-dasharray="3 2"/>
<polyline points="604,367.5 639,607" fill="none" stroke="#000" stroke-width="1.3" />
<polyline points="607,367 642,606.5" fill="none" stroke="#000" stroke-width="1.3" />
<path d="M518.5,443.9 Q517.5,436.0 525.4,434.7 L572.1,427.3 Q580.0,426.0 581.1,433.9 L597.9,554.1 Q599.0,562.0 591.2,563.7 L543.8,574.3 Q536.0,576.0 535.0,568.1 Z" fill="#7e7e00" stroke="#000" stroke-width="1.4"/>
<path d="M645.5,418.9 Q644.5,411.0 652.4,409.5 L698.1,400.5 Q706.0,399.0 707.1,406.9 L723.9,529.1 Q725.0,537.0 717.2,538.6 L670.3,547.9 Q662.5,549.5 661.5,541.6 Z" fill="#7e7e00" stroke="#000" stroke-width="1.4"/>
<circle cx="515" cy="449" r="1.800" fill="#919b91" stroke="#000" stroke-width="1.3"/>
<circle cx="583" cy="436" r="1.800" fill="#919b91" stroke="#000" stroke-width="1.3"/>
<circle cx="600" cy="551" r="1.800" fill="#919b91" stroke="#000" stroke-width="1.3"/>
<circle cx="533" cy="565" r="1.800" fill="#919b91" stroke="#000" stroke-width="1.3"/>
<circle cx="642" cy="423" r="1.800" fill="#919b91" stroke="#000" stroke-width="1.3"/>
<circle cx="709" cy="409" r="1.800" fill="#919b91" stroke="#000" stroke-width="1.3"/>
<circle cx="727" cy="526" r="1.800" fill="#919b91" stroke="#000" stroke-width="1.3"/>
<circle cx="659" cy="539" r="1.800" fill="#919b91" stroke="#000" stroke-width="1.3"/>
<polygon points="592.5,460.5 605,458 613.5,520.5 601.5,523" fill="#0a0a0a" stroke="none" stroke-width="1.3" />
<polygon points="590,459.5 602.5,457 611,519.5 599,522" fill="#2a8a30" stroke="#000" stroke-width="1.3" />
<path d="M594.1,465.6 Q593.7,462.6 596.6,462.0 L597.0,462.0 Q599.9,461.4 600.3,464.3 L607.1,513.4 Q607.5,516.4 604.5,517.0 L604.4,517.0 Q601.5,517.6 601.0,514.7 Z" fill="#2f9a38" stroke="#000" stroke-width="1.3"/>
<ellipse cx="598.0" cy="470.8" rx="2.4" ry="4" fill="#2f9a38" stroke="#000" stroke-width="1.3" transform="rotate(-8 598.0 470.8)"/>
<path d="M597.2,468.8 l0.600,4 M598.8,468.6 l0.600,4" stroke="#000" stroke-width="1.3"/>
<path d="M600.5,477.9 L605.6,514.2" stroke="#000" stroke-width="1.3"/>
<polygon points="631.5,454 643.5,452 652.5,513 640,516" fill="#0a0a0a" stroke="none" stroke-width="1.3" />
<polygon points="629,453 641,451 650,512 637.5,515" fill="#f4f4f4" stroke="#000" stroke-width="1.3" />
<path d="M632.9,459.2 Q632.5,456.2 635.5,455.7 L635.6,455.7 Q638.5,455.2 639.0,458.1 L645.9,506.1 Q646.3,509.1 643.4,509.8 L643.0,509.9 Q640.1,510.5 639.7,507.6 Z" fill="#fff" stroke="#000" stroke-width="1.3"/>
<ellipse cx="636.8" cy="464.3" rx="2.4" ry="4" fill="#fff" stroke="#000" stroke-width="1.3" transform="rotate(-8 636.8 464.3)"/>
<path d="M636.0,462.3 l0.600,4 M637.5,462.1 l0.600,4" stroke="#000" stroke-width="1.3"/>
<path d="M639.3,471.4 L644.4,507.0" stroke="#000" stroke-width="1.3"/>
<polygon points="471,419 495,414 500,446 476,451" fill="#f6f6f6" stroke="#000" stroke-width="1.3" />
<polygon points="472.11,419.76 481.23,417.86 485.93,447.94 476.81,449.84" fill="#8c8c8c" stroke="none" stroke-width="1.3" />
<polygon points="479.64,417.2 484.44,416.2 485.69,424.2 480.89,425.2" fill="url(#cyl)" stroke="#222" stroke-width="1.3" />
<polygon points="482.81,424.8 487.61,423.8 488.86,431.8 484.06,432.8" fill="url(#cyl)" stroke="#222" stroke-width="1.3" />
<polygon points="482.14,433.2 486.94,432.2 488.19,440.2 483.39,441.2" fill="url(#cyl)" stroke="#222" stroke-width="1.3" />
<polygon points="485.31,440.8 490.11,439.8 491.36,447.8 486.56,448.8" fill="url(#cyl)" stroke="#222" stroke-width="1.3" />
<circle cx="476.8" cy="424.4" r="2" fill="#050505"/>
<path d="M477.1,422.6 a1.900,1.900 0 0,1 0,3.600" fill="none" stroke="#f4f4f4" stroke-width="1.3"/>
<circle cx="491.7" cy="421.3" r="2" fill="#050505"/>
<path d="M492.0,419.5 a1.900,1.900 0 0,1 0,3.600" fill="none" stroke="#f4f4f4" stroke-width="1.3"/>
<circle cx="478.3" cy="434.0" r="2" fill="#050505"/>
<path d="M478.6,432.2 a1.900,1.900 0 0,1 0,3.600" fill="none" stroke="#f4f4f4" stroke-width="1.3"/>
<circle cx="493.2" cy="430.9" r="2" fill="#050505"/>
<path d="M493.5,429.1 a1.900,1.900 0 0,1 0,3.600" fill="none" stroke="#f4f4f4" stroke-width="1.3"/>
<circle cx="479.8" cy="443.6" r="2" fill="#050505"/>
<path d="M480.1,441.8 a1.900,1.900 0 0,1 0,3.600" fill="none" stroke="#f4f4f4" stroke-width="1.3"/>
<circle cx="494.7" cy="440.5" r="2" fill="#050505"/>
<path d="M495.0,438.7 a1.900,1.900 0 0,1 0,3.600" fill="none" stroke="#f4f4f4" stroke-width="1.3"/>
<polygon points="495,577.5 519,573 524,605 500,610" fill="#f6f6f6" stroke="#000" stroke-width="1.3" />
<polygon points="496.11,578.294 505.23,576.579 509.93,606.931 500.81,608.826" fill="#8c8c8c" stroke="none" stroke-width="1.3" />
<polygon points="503.64,575.88 508.44,574.98 509.69,583.035 504.89,583.96" fill="url(#cyl)" stroke="#222" stroke-width="1.3" />
<polygon points="506.81,583.59 511.61,582.665 512.86,590.71 508.06,591.66" fill="url(#cyl)" stroke="#222" stroke-width="1.3" />
<polygon points="506.14,592.04 510.94,591.09 512.19,599.145 507.39,600.12" fill="url(#cyl)" stroke="#222" stroke-width="1.3" />
<polygon points="509.31,599.73 514.11,598.755 515.36,606.8 510.56,607.8" fill="url(#cyl)" stroke="#222" stroke-width="1.3" />
<circle cx="500.8" cy="583.1" r="2" fill="#050505"/>
<path d="M501.1,581.3 a1.900,1.900 0 0,1 0,3.600" fill="none" stroke="#f4f4f4" stroke-width="1.3"/>
<circle cx="515.7" cy="580.2" r="2" fill="#050505"/>
<path d="M516.0,578.4 a1.900,1.900 0 0,1 0,3.600" fill="none" stroke="#f4f4f4" stroke-width="1.3"/>
<circle cx="502.3" cy="592.8" r="2" fill="#050505"/>
<path d="M502.6,591.0 a1.900,1.900 0 0,1 0,3.600" fill="none" stroke="#f4f4f4" stroke-width="1.3"/>
<circle cx="517.2" cy="589.9" r="2" fill="#050505"/>
<path d="M517.5,588.1 a1.900,1.900 0 0,1 0,3.600" fill="none" stroke="#f4f4f4" stroke-width="1.3"/>
<circle cx="503.8" cy="602.5" r="2" fill="#050505"/>
<path d="M504.1,600.7 a1.900,1.900 0 0,1 0,3.600" fill="none" stroke="#f4f4f4" stroke-width="1.3"/>
<circle cx="518.7" cy="599.5" r="2" fill="#050505"/>
<path d="M519.0,597.7 a1.900,1.900 0 0,1 0,3.600" fill="none" stroke="#f4f4f4" stroke-width="1.3"/>
<polygon points="716,369 728,366.5 734,399 721,401.5" fill="#b4b4bc" stroke="#000" stroke-width="1.3" />
<polygon points="716.631,369.875 721.203,368.925 726.297,399.475 721.369,400.425" fill="#5e5e66" stroke="none" stroke-width="1.3" />
<polygon points="720.32,368.1 722.72,367.6 724.11,375.725 721.66,376.225" fill="#8a8a92" stroke="#222" stroke-width="1.3" />
<polygon points="722.64,376.025 725.09,375.525 726.5,383.65 724,384.15" fill="#8a8a92" stroke="#222" stroke-width="1.3" />
<polygon points="723,384.35 725.5,383.85 726.89,391.975 724.34,392.475" fill="#8a8a92" stroke="#222" stroke-width="1.3" />
<polygon points="725.36,392.275 727.91,391.775 729.32,399.9 726.72,400.4" fill="#8a8a92" stroke="#222" stroke-width="1.3" />
<circle cx="719.4" cy="375.0" r="2" fill="#050505"/>
<path d="M719.7,373.2 a1.900,1.900 0 0,1 0,3.600" fill="none" stroke="#f4f4f4" stroke-width="1.3"/>
<circle cx="727.0" cy="373.4" r="2" fill="#050505"/>
<path d="M727.3,371.6 a1.900,1.900 0 0,1 0,3.600" fill="none" stroke="#f4f4f4" stroke-width="1.3"/>
<circle cx="721.0" cy="384.8" r="2" fill="#050505"/>
<path d="M721.3,382.9 a1.900,1.900 0 0,1 0,3.600" fill="none" stroke="#f4f4f4" stroke-width="1.3"/>
<circle cx="728.8" cy="383.2" r="2" fill="#050505"/>
<path d="M729.0,381.4 a1.900,1.900 0 0,1 0,3.600" fill="none" stroke="#f4f4f4" stroke-width="1.3"/>
<circle cx="722.6" cy="394.5" r="2" fill="#050505"/>
<path d="M722.9,392.7 a1.900,1.900 0 0,1 0,3.600" fill="none" stroke="#f4f4f4" stroke-width="1.3"/>
<circle cx="730.5" cy="392.9" r="2" fill="#050505"/>
<path d="M730.8,391.1 a1.900,1.900 0 0,1 0,3.600" fill="none" stroke="#f4f4f4" stroke-width="1.3"/>
<polygon points="740,528 752,525.5 757.5,557 745,560" fill="#b4b4bc" stroke="#000" stroke-width="1.3" />
<polygon points="740.631,528.859 745.196,527.904 750.094,557.786 745.349,558.921" fill="#5e5e66" stroke="none" stroke-width="1.3" />
<polygon points="744.32,527.1 746.72,526.6 748.04,534.53 745.615,535.055" fill="#8a8a92" stroke="#222" stroke-width="1.3" />
<polygon points="746.585,534.845 749.01,534.32 750.34,542.24 747.89,542.79" fill="#8a8a92" stroke="#222" stroke-width="1.3" />
<polygon points="746.91,543.01 749.36,542.46 750.68,550.39 748.205,550.965" fill="#8a8a92" stroke="#222" stroke-width="1.3" />
<polygon points="749.195,550.735 751.67,550.16 753,558.08 750.5,558.68" fill="#8a8a92" stroke="#222" stroke-width="1.3" />
<circle cx="743.4" cy="533.9" r="2" fill="#050505"/>
<path d="M743.7,532.1 a1.900,1.900 0 0,1 0,3.600" fill="none" stroke="#f4f4f4" stroke-width="1.3"/>
<circle cx="750.9" cy="532.3" r="2" fill="#050505"/>
<path d="M751.2,530.5 a1.900,1.900 0 0,1 0,3.600" fill="none" stroke="#f4f4f4" stroke-width="1.3"/>
<circle cx="745.0" cy="543.5" r="2" fill="#050505"/>
<path d="M745.2,541.7 a1.900,1.900 0 0,1 0,3.600" fill="none" stroke="#f4f4f4" stroke-width="1.3"/>
<circle cx="752.5" cy="541.7" r="2" fill="#050505"/>
<path d="M752.8,539.9 a1.900,1.900 0 0,1 0,3.600" fill="none" stroke="#f4f4f4" stroke-width="1.3"/>
<circle cx="746.5" cy="553.0" r="2" fill="#050505"/>
<path d="M746.8,551.2 a1.900,1.900 0 0,1 0,3.600" fill="none" stroke="#f4f4f4" stroke-width="1.3"/>
<circle cx="754.2" cy="551.2" r="2" fill="#050505"/>
<path d="M754.5,549.4 a1.900,1.900 0 0,1 0,3.600" fill="none" stroke="#f4f4f4" stroke-width="1.3"/>
<circle cx="736" cy="371" r="0.800" fill="#222"/>
<circle cx="738" cy="381" r="0.800" fill="#222"/>
<circle cx="739.5" cy="392" r="0.800" fill="#222"/>
<circle cx="759" cy="530" r="0.800" fill="#222"/>
<circle cx="761" cy="540" r="0.800" fill="#222"/>
<circle cx="762.5" cy="550" r="0.800" fill="#222"/>
<polygon points="819.5,327.5 1063,306 1098,546 854,567.5" fill="none" stroke="#000" stroke-width="1.3" />
<polyline points="822,329 856.5,566" fill="none" stroke="#000" stroke-width="1.3" stroke-dasharray="3 2"/>
<polyline points="1060,308 1095,545" fill="none" stroke="#000" stroke-width="1.3" stroke-dasharray="3 2"/>
<polyline points="941.5,317.5 976.5,557" fill="none" stroke="#000" stroke-width="1.3" />
<polyline points="944,317 979,556.5" fill="none" stroke="#aaa" stroke-width="1.3" />
<path d="M855.1,383.9 Q854.0,376.0 862.0,375.3 L908.0,371.2 Q916.0,370.5 917.1,378.4 L933.9,498.1 Q935.0,506.0 927.1,507.1 L880.4,513.9 Q872.5,515.0 871.4,507.1 Z" fill="#484a00" stroke="#000" stroke-width="1.4"/>
<path d="M983.6,372.9 Q982.5,365.0 990.5,364.2 L1037.0,359.8 Q1045.0,359.0 1046.1,366.9 L1062.9,487.1 Q1064.0,495.0 1056.1,496.1 L1008.9,502.9 Q1001.0,504.0 999.9,496.1 Z" fill="#484a00" stroke="#000" stroke-width="1.4"/>
<circle cx="852" cy="388" r="1.800" fill="#525650" stroke="#000" stroke-width="1.3"/>
<circle cx="920" cy="382" r="1.800" fill="#525650" stroke="#000" stroke-width="1.3"/>
<circle cx="937" cy="497" r="1.800" fill="#525650" stroke="#000" stroke-width="1.3"/>
<circle cx="869" cy="505" r="1.800" fill="#525650" stroke="#000" stroke-width="1.3"/>
<circle cx="980" cy="376" r="1.800" fill="#525650" stroke="#000" stroke-width="1.3"/>
<circle cx="1049" cy="370" r="1.800" fill="#525650" stroke="#000" stroke-width="1.3"/>
<circle cx="1066" cy="486" r="1.800" fill="#525650" stroke="#000" stroke-width="1.3"/>
<circle cx="998" cy="492" r="1.800" fill="#525650" stroke="#000" stroke-width="1.3"/>
<polygon points="932.5,410 945,408.5 953.5,470 941.5,471.5" fill="#0a0a0a" stroke="none" stroke-width="1.3" />
<polygon points="930,409 942.5,407.5 951,469 939,470.5" fill="#9a9a9a" stroke="#000" stroke-width="1.3" />
<path d="M934.1,415.3 Q933.7,412.3 936.6,412.0 L936.9,411.9 Q939.9,411.6 940.3,414.5 L947.1,462.7 Q947.5,465.7 944.5,466.1 L944.4,466.1 Q941.5,466.4 941.0,463.5 Z" fill="#bdbdbd" stroke="#000" stroke-width="1.3"/>
<ellipse cx="943.2" cy="457.4" rx="2.4" ry="4" fill="#bdbdbd" stroke="#000" stroke-width="1.3" transform="rotate(-8 943.2 457.4)"/>
<path d="M942.5,455.4 l0.600,4 M944.0,455.2 l0.600,4" stroke="#000" stroke-width="1.3"/>
<path d="M938.6,414.2 L943.7,449.9" stroke="#000" stroke-width="1.3"/>
<polygon points="972,407 983.5,406 993,467 981.5,469" fill="#0a0a0a" stroke="none" stroke-width="1.3" />
<polygon points="969.5,406 981,405 990.5,466 979,468" fill="#2a7a33" stroke="#000" stroke-width="1.3" />
<path d="M973.4,412.4 Q972.9,409.5 975.9,409.2 L975.7,409.2 Q978.7,408.9 979.2,411.9 L986.6,459.9 Q987.1,462.8 984.1,463.3 L984.3,463.3 Q981.3,463.8 980.8,460.8 Z" fill="#216828" stroke="#000" stroke-width="1.3"/>
<ellipse cx="982.9" cy="454.7" rx="2.4" ry="4" fill="#216828" stroke="#000" stroke-width="1.3" transform="rotate(-8 982.9 454.7)"/>
<path d="M982.1,452.7 l0.600,4 M983.6,452.5 l0.600,4" stroke="#000" stroke-width="1.3"/>
<path d="M977.6,411.5 L983.1,447.1" stroke="#000" stroke-width="1.3"/>
<polygon points="1059,332 1083,328.5 1086.5,359 1063,362.5" fill="#f6f6f6" stroke="#000" stroke-width="1.3" />
<polygon points="1060.08,332.775 1069.19,331.445 1072.76,360.115 1063.82,361.445" fill="#8c8c8c" stroke="none" stroke-width="1.3" />
<polygon points="1067.64,330.74 1072.44,330.04 1073.37,337.665 1068.6,338.365" fill="url(#cyl)" stroke="#222" stroke-width="1.3" />
<polygon points="1070.5,338.085 1075.28,337.385 1076.2,345.01 1071.45,345.71" fill="url(#cyl)" stroke="#222" stroke-width="1.3" />
<polygon points="1069.55,345.99 1074.3,345.29 1075.23,352.915 1070.51,353.615" fill="url(#cyl)" stroke="#222" stroke-width="1.3" />
<polygon points="1072.39,353.335 1077.12,352.635 1078.04,360.26 1073.34,360.96" fill="url(#cyl)" stroke="#222" stroke-width="1.3" />
<circle cx="1064.6" cy="337.4" r="2" fill="#050505"/>
<path d="M1064.9,335.6 a1.900,1.900 0 0,1 0,3.600" fill="none" stroke="#f4f4f4" stroke-width="1.3"/>
<circle cx="1079.4" cy="335.2" r="2" fill="#050505"/>
<path d="M1079.7,333.4 a1.900,1.900 0 0,1 0,3.600" fill="none" stroke="#f4f4f4" stroke-width="1.3"/>
<circle cx="1065.8" cy="346.6" r="2" fill="#050505"/>
<path d="M1066.0,344.8 a1.900,1.900 0 0,1 0,3.600" fill="none" stroke="#f4f4f4" stroke-width="1.3"/>
<circle cx="1080.5" cy="344.4" r="2" fill="#050505"/>
<path d="M1080.8,342.6 a1.900,1.900 0 0,1 0,3.600" fill="none" stroke="#f4f4f4" stroke-width="1.3"/>
<circle cx="1066.9" cy="355.7" r="2" fill="#050505"/>
<path d="M1067.2,353.9 a1.900,1.900 0 0,1 0,3.600" fill="none" stroke="#f4f4f4" stroke-width="1.3"/>
<circle cx="1081.6" cy="353.5" r="2" fill="#050505"/>
<path d="M1081.9,351.7 a1.900,1.900 0 0,1 0,3.600" fill="none" stroke="#f4f4f4" stroke-width="1.3"/>
<polygon points="1082.5,491 1106,487.5 1110,518 1087,521.5" fill="#f6f6f6" stroke="#000" stroke-width="1.3" />
<polygon points="1083.57,491.775 1092.5,490.445 1096.53,519.115 1087.79,520.445" fill="#8c8c8c" stroke="none" stroke-width="1.3" />
<polygon points="1090.96,489.74 1095.66,489.04 1096.72,496.665 1092.04,497.365" fill="url(#cyl)" stroke="#222" stroke-width="1.3" />
<polygon points="1093.91,497.085 1098.59,496.385 1099.63,504.01 1094.98,504.71" fill="url(#cyl)" stroke="#222" stroke-width="1.3" />
<polygon points="1093.12,504.99 1097.77,504.29 1098.83,511.915 1094.2,512.615" fill="url(#cyl)" stroke="#222" stroke-width="1.3" />
<polygon points="1096.05,512.335 1100.67,511.635 1101.72,519.26 1097.12,519.96" fill="url(#cyl)" stroke="#222" stroke-width="1.3" />
<circle cx="1088.1" cy="496.4" r="2" fill="#050505"/>
<path d="M1088.4,494.6 a1.900,1.900 0 0,1 0,3.600" fill="none" stroke="#f4f4f4" stroke-width="1.3"/>
<circle cx="1102.6" cy="494.2" r="2" fill="#050505"/>
<path d="M1102.9,492.4 a1.900,1.900 0 0,1 0,3.600" fill="none" stroke="#f4f4f4" stroke-width="1.3"/>
<circle cx="1089.4" cy="505.5" r="2" fill="#050505"/>
<path d="M1089.7,503.7 a1.900,1.900 0 0,1 0,3.600" fill="none" stroke="#f4f4f4" stroke-width="1.3"/>
<circle cx="1103.8" cy="503.4" r="2" fill="#050505"/>
<path d="M1104.1,501.6 a1.900,1.900 0 0,1 0,3.600" fill="none" stroke="#f4f4f4" stroke-width="1.3"/>
<circle cx="1090.7" cy="514.7" r="2" fill="#050505"/>
<path d="M1091.0,512.9 a1.900,1.900 0 0,1 0,3.600" fill="none" stroke="#f4f4f4" stroke-width="1.3"/>
<circle cx="1105.0" cy="512.5" r="2" fill="#050505"/>
<path d="M1105.3,510.7 a1.900,1.900 0 0,1 0,3.600" fill="none" stroke="#f4f4f4" stroke-width="1.3"/>
<polygon points="822.5,353 834,351.5 838.5,383 827,385" fill="#f6f6f6" stroke="#000" stroke-width="1.3" />
<polygon points="823.095,353.899 827.465,353.324 831.695,383.206 827.325,383.961" fill="#8c8c8c" stroke="none" stroke-width="1.3" />
<polygon points="826.64,352.46 828.94,352.16 830.065,360.09 827.765,360.415" fill="url(#cyl)" stroke="#222" stroke-width="1.3" />
<polygon points="828.685,360.285 830.985,359.96 832.11,367.88 829.81,368.23" fill="url(#cyl)" stroke="#222" stroke-width="1.3" />
<polygon points="828.89,368.37 831.19,368.02 832.315,375.95 830.015,376.325" fill="url(#cyl)" stroke="#222" stroke-width="1.3" />
<polygon points="830.935,376.175 833.235,375.8 834.36,383.72 832.06,384.12" fill="url(#cyl)" stroke="#222" stroke-width="1.3" />
<circle cx="825.7" cy="359.1" r="2" fill="#050505"/>
<path d="M826.0,357.3 a1.900,1.900 0 0,1 0,3.600" fill="none" stroke="#f4f4f4" stroke-width="1.3"/>
<circle cx="832.8" cy="358.1" r="2" fill="#050505"/>
<path d="M833.1,356.3 a1.900,1.900 0 0,1 0,3.600" fill="none" stroke="#f4f4f4" stroke-width="1.3"/>
<circle cx="827.0" cy="368.6" r="2" fill="#050505"/>
<path d="M827.3,366.8 a1.900,1.900 0 0,1 0,3.600" fill="none" stroke="#f4f4f4" stroke-width="1.3"/>
<circle cx="834.2" cy="367.6" r="2" fill="#050505"/>
<path d="M834.5,365.8 a1.900,1.900 0 0,1 0,3.600" fill="none" stroke="#f4f4f4" stroke-width="1.3"/>
<circle cx="828.4" cy="378.2" r="2" fill="#050505"/>
<path d="M828.7,376.4 a1.900,1.900 0 0,1 0,3.600" fill="none" stroke="#f4f4f4" stroke-width="1.3"/>
<circle cx="835.5" cy="377.0" r="2" fill="#050505"/>
<path d="M835.8,375.2 a1.900,1.900 0 0,1 0,3.600" fill="none" stroke="#f4f4f4" stroke-width="1.3"/>
<polygon points="845,512 857,510.5 862,543 850,545" fill="#f6f6f6" stroke="#000" stroke-width="1.3" />
<polygon points="845.63,512.929 850.19,512.354 854.89,543.176 850.33,543.931" fill="#8c8c8c" stroke="none" stroke-width="1.3" />
<polygon points="849.32,511.46 851.72,511.16 852.97,519.34 850.57,519.665" fill="url(#cyl)" stroke="#222" stroke-width="1.3" />
<polygon points="851.53,519.535 853.93,519.21 855.18,527.38 852.78,527.73" fill="url(#cyl)" stroke="#222" stroke-width="1.3" />
<polygon points="851.82,527.87 854.22,527.52 855.47,535.7 853.07,536.075" fill="url(#cyl)" stroke="#222" stroke-width="1.3" />
<polygon points="854.03,535.925 856.43,535.55 857.68,543.72 855.28,544.12" fill="url(#cyl)" stroke="#222" stroke-width="1.3" />
<circle cx="848.4" cy="518.3" r="2" fill="#050505"/>
<path d="M848.7,516.5 a1.900,1.900 0 0,1 0,3.600" fill="none" stroke="#f4f4f4" stroke-width="1.3"/>
<circle cx="855.8" cy="517.3" r="2" fill="#050505"/>
<path d="M856.1,515.5 a1.900,1.900 0 0,1 0,3.600" fill="none" stroke="#f4f4f4" stroke-width="1.3"/>
<circle cx="849.9" cy="528.1" r="2" fill="#050505"/>
<path d="M850.2,526.4 a1.900,1.900 0 0,1 0,3.600" fill="none" stroke="#f4f4f4" stroke-width="1.3"/>
<circle cx="857.3" cy="527.1" r="2" fill="#050505"/>
<path d="M857.6,525.3 a1.900,1.900 0 0,1 0,3.600" fill="none" stroke="#f4f4f4" stroke-width="1.3"/>
<circle cx="851.4" cy="538.0" r="2" fill="#050505"/>
<path d="M851.7,536.2 a1.900,1.900 0 0,1 0,3.600" fill="none" stroke="#f4f4f4" stroke-width="1.3"/>
<circle cx="858.8" cy="536.8" r="2" fill="#050505"/>
<path d="M859.1,535.0 a1.900,1.900 0 0,1 0,3.600" fill="none" stroke="#f4f4f4" stroke-width="1.3"/>
<polygon points="534,1001 777,946 780,950 856,936 858,946 805,969.5 648.5,983.4 648.5,977.4 605,981.4 549.5,1001" fill="#868686" stroke="#000" stroke-width="1.3" />
<polyline points="724,959.5 779,951 805,952" fill="none" stroke="#000" stroke-width="1.3" />
<polygon points="486,729 820,661 860,934 780,950 777,946 534,1001 526,1001" fill="#f2f2f2" stroke="#000" stroke-width="1.3" />
<polygon points="605,981.4 648.5,977.4 648.5,981.5 606,985.5" fill="#a8a8a8" stroke="#000" stroke-width="1.3" />
<polyline points="489,733 529,1001" fill="none" stroke="#000" stroke-width="1.3" stroke-dasharray="3 2"/>
<polyline points="817,666 856,934" fill="none" stroke="#000" stroke-width="1.3" stroke-dasharray="4 2"/>
<polygon points="511,762.5 804.5,702.5 834,900 540,961" fill="#919b91" stroke="#000" stroke-width="1.3" />
<polyline points="541,964 835,903" fill="none" stroke="#000" stroke-width="1.3" />
<polyline points="807,704 836.5,900" fill="none" stroke="#000" stroke-width="1.3" stroke-dasharray="3 2"/>
<polyline points="657.5,732.5 686,930" fill="none" stroke="#000" stroke-width="1.3" />
<polyline points="660,732 688.5,929.5" fill="none" stroke="#000" stroke-width="1.3" />
<polygon points="642.5,806 655,803 664.5,864.5 652,867.5" fill="#0a0a0a" stroke="none" stroke-width="1.3" />
<polygon points="640,805 652.5,802 662,863.5 649.5,866.5" fill="#f4f4f4" stroke="#000" stroke-width="1.3" />
<path d="M644.2,810.9 Q643.7,807.9 646.6,807.2 L647.0,807.1 Q649.9,806.4 650.4,809.4 L657.8,857.6 Q658.3,860.6 655.4,861.3 L655.0,861.4 Q652.1,862.1 651.6,859.1 Z" fill="#fff" stroke="#000" stroke-width="1.3"/>
<ellipse cx="653.9" cy="852.7" rx="2.4" ry="4" fill="#fff" stroke="#000" stroke-width="1.3" transform="rotate(-8 653.9 852.7)"/>
<path d="M653.1,850.7 l0.600,4 M654.6,850.5 l0.600,4" stroke="#000" stroke-width="1.3"/>
<path d="M648.7,809.3 L654.2,845.0" stroke="#000" stroke-width="1.3"/>
<polygon points="682,796 695,793 703.5,854.5 691.5,857.5" fill="#0a0a0a" stroke="none" stroke-width="1.3" />
<polygon points="679.5,795 692.5,792 701,853.5 689,856.5" fill="#2a8a30" stroke="#000" stroke-width="1.3" />
<path d="M683.8,800.9 Q683.3,797.9 686.2,797.3 L686.9,797.1 Q689.8,796.4 690.2,799.4 L697.1,847.6 Q697.5,850.6 694.6,851.3 L694.4,851.3 Q691.4,852.1 691.0,849.1 Z" fill="#2f9a38" stroke="#000" stroke-width="1.3"/>
<ellipse cx="693.2" cy="842.7" rx="2.4" ry="4" fill="#2f9a38" stroke="#000" stroke-width="1.3" transform="rotate(-8 693.2 842.7)"/>
<path d="M692.4,840.7 l0.600,4 M694.0,840.5 l0.600,4" stroke="#000" stroke-width="1.3"/>
<path d="M688.4,799.3 L693.6,835.0" stroke="#000" stroke-width="1.3"/>
<polygon points="500,790 523,786 527,818 504,822" fill="#f6f6f6" stroke="#000" stroke-width="1.3" />
<polygon points="501.04,790.8 509.78,789.28 513.54,819.36 504.8,820.88" fill="#8c8c8c" stroke="none" stroke-width="1.3" />
<polygon points="508.28,788.56 512.88,787.76 513.88,795.76 509.28,796.56" fill="url(#cyl)" stroke="#222" stroke-width="1.3" />
<polygon points="511.12,796.24 515.72,795.44 516.72,803.44 512.12,804.24" fill="url(#cyl)" stroke="#222" stroke-width="1.3" />
<polygon points="510.28,804.56 514.88,803.76 515.88,811.76 511.28,812.56" fill="url(#cyl)" stroke="#222" stroke-width="1.3" />
<polygon points="513.12,812.24 517.72,811.44 518.72,819.44 514.12,820.24" fill="url(#cyl)" stroke="#222" stroke-width="1.3" />
<circle cx="505.4" cy="795.6" r="2" fill="#050505"/>
<path d="M505.7,793.8 a1.900,1.900 0 0,1 0,3.600" fill="none" stroke="#f4f4f4" stroke-width="1.3"/>
<circle cx="519.7" cy="793.1" r="2" fill="#050505"/>
<path d="M520.0,791.3 a1.900,1.900 0 0,1 0,3.600" fill="none" stroke="#f4f4f4" stroke-width="1.3"/>
<circle cx="506.6" cy="805.2" r="2" fill="#050505"/>
<path d="M506.9,803.4 a1.900,1.900 0 0,1 0,3.600" fill="none" stroke="#f4f4f4" stroke-width="1.3"/>
<circle cx="520.9" cy="802.7" r="2" fill="#050505"/>
<path d="M521.2,800.9 a1.900,1.900 0 0,1 0,3.600" fill="none" stroke="#f4f4f4" stroke-width="1.3"/>
<circle cx="507.8" cy="814.8" r="2" fill="#050505"/>
<path d="M508.1,813.0 a1.900,1.900 0 0,1 0,3.600" fill="none" stroke="#f4f4f4" stroke-width="1.3"/>
<circle cx="522.1" cy="812.3" r="2" fill="#050505"/>
<path d="M522.4,810.5 a1.900,1.900 0 0,1 0,3.600" fill="none" stroke="#f4f4f4" stroke-width="1.3"/>
<polygon points="516,904 540,899.5 544.5,932 521,936.5" fill="#f6f6f6" stroke="#000" stroke-width="1.3" />
<polygon points="517.109,904.795 526.224,903.085 530.726,933.635 521.791,935.345" fill="#8c8c8c" stroke="none" stroke-width="1.3" />
<polygon points="524.64,902.38 529.44,901.48 530.62,909.605 525.845,910.505" fill="url(#cyl)" stroke="#222" stroke-width="1.3" />
<polygon points="527.755,910.145 532.53,909.245 533.7,917.37 528.95,918.27" fill="url(#cyl)" stroke="#222" stroke-width="1.3" />
<polygon points="527.05,918.63 531.8,917.73 532.98,925.855 528.255,926.755" fill="url(#cyl)" stroke="#222" stroke-width="1.3" />
<polygon points="530.145,926.395 534.87,925.495 536.04,933.62 531.34,934.52" fill="url(#cyl)" stroke="#222" stroke-width="1.3" />
<circle cx="521.8" cy="909.6" r="2" fill="#050505"/>
<path d="M522.1,907.8 a1.900,1.900 0 0,1 0,3.600" fill="none" stroke="#f4f4f4" stroke-width="1.3"/>
<circle cx="536.6" cy="906.8" r="2" fill="#050505"/>
<path d="M536.9,905.0 a1.900,1.900 0 0,1 0,3.600" fill="none" stroke="#f4f4f4" stroke-width="1.3"/>
<circle cx="523.2" cy="919.4" r="2" fill="#050505"/>
<path d="M523.5,917.6 a1.900,1.900 0 0,1 0,3.600" fill="none" stroke="#f4f4f4" stroke-width="1.3"/>
<circle cx="538.0" cy="916.6" r="2" fill="#050505"/>
<path d="M538.3,914.8 a1.900,1.900 0 0,1 0,3.600" fill="none" stroke="#f4f4f4" stroke-width="1.3"/>
<circle cx="524.7" cy="929.1" r="2" fill="#050505"/>
<path d="M525.0,927.3 a1.900,1.900 0 0,1 0,3.600" fill="none" stroke="#f4f4f4" stroke-width="1.3"/>
<circle cx="539.4" cy="926.3" r="2" fill="#050505"/>
<path d="M539.7,924.5 a1.900,1.900 0 0,1 0,3.600" fill="none" stroke="#f4f4f4" stroke-width="1.3"/>
<polygon points="797.5,729 810,726.5 814.5,759 802,761.5" fill="#b4b4bc" stroke="#000" stroke-width="1.3" />
<polygon points="798.135,729.875 802.885,728.925 807.115,759.475 802.365,760.425" fill="#5e5e66" stroke="none" stroke-width="1.3" />
<polygon points="802,728.1 804.5,727.6 805.625,735.725 803.125,736.225" fill="#8a8a92" stroke="#222" stroke-width="1.3" />
<polygon points="804.125,736.025 806.625,735.525 807.75,743.65 805.25,744.15" fill="#8a8a92" stroke="#222" stroke-width="1.3" />
<polygon points="804.25,744.35 806.75,743.85 807.875,751.975 805.375,752.475" fill="#8a8a92" stroke="#222" stroke-width="1.3" />
<polygon points="806.375,752.275 808.875,751.775 810,759.9 807.5,760.4" fill="#8a8a92" stroke="#222" stroke-width="1.3" />
<circle cx="800.9" cy="735.0" r="2" fill="#050505"/>
<path d="M801.2,733.2 a1.900,1.900 0 0,1 0,3.600" fill="none" stroke="#f4f4f4" stroke-width="1.3"/>
<circle cx="808.6" cy="733.5" r="2" fill="#050505"/>
<path d="M808.9,731.7 a1.900,1.900 0 0,1 0,3.600" fill="none" stroke="#f4f4f4" stroke-width="1.3"/>
<circle cx="802.2" cy="744.8" r="2" fill="#050505"/>
<path d="M802.5,743.0 a1.900,1.900 0 0,1 0,3.600" fill="none" stroke="#f4f4f4" stroke-width="1.3"/>
<circle cx="810.0" cy="743.2" r="2" fill="#050505"/>
<path d="M810.3,741.4 a1.900,1.900 0 0,1 0,3.600" fill="none" stroke="#f4f4f4" stroke-width="1.3"/>
<circle cx="803.6" cy="754.5" r="2" fill="#050505"/>
<path d="M803.9,752.7 a1.900,1.900 0 0,1 0,3.600" fill="none" stroke="#f4f4f4" stroke-width="1.3"/>
<circle cx="811.4" cy="753.0" r="2" fill="#050505"/>
<path d="M811.6,751.2 a1.900,1.900 0 0,1 0,3.600" fill="none" stroke="#f4f4f4" stroke-width="1.3"/>
<polygon points="814.5,842.5 826,840 830.5,873 819,875.5" fill="#b4b4bc" stroke="#000" stroke-width="1.3" />
<polygon points="815.095,843.39 819.465,842.44 823.695,873.46 819.325,874.41" fill="#5e5e66" stroke="none" stroke-width="1.3" />
<polygon points="818.64,841.6 820.94,841.1 822.065,849.35 819.765,849.85" fill="#8a8a92" stroke="#222" stroke-width="1.3" />
<polygon points="820.685,849.65 822.985,849.15 824.11,857.4 821.81,857.9" fill="#8a8a92" stroke="#222" stroke-width="1.3" />
<polygon points="820.89,858.1 823.19,857.6 824.315,865.85 822.015,866.35" fill="#8a8a92" stroke="#222" stroke-width="1.3" />
<polygon points="822.935,866.15 825.235,865.65 826.36,873.9 824.06,874.4" fill="#8a8a92" stroke="#222" stroke-width="1.3" />
<circle cx="817.7" cy="848.6" r="2" fill="#050505"/>
<path d="M818.0,846.8 a1.900,1.900 0 0,1 0,3.600" fill="none" stroke="#f4f4f4" stroke-width="1.3"/>
<circle cx="824.8" cy="847.1" r="2" fill="#050505"/>
<path d="M825.1,845.3 a1.900,1.900 0 0,1 0,3.600" fill="none" stroke="#f4f4f4" stroke-width="1.3"/>
<circle cx="819.0" cy="858.5" r="2" fill="#050505"/>
<path d="M819.3,856.7 a1.900,1.900 0 0,1 0,3.600" fill="none" stroke="#f4f4f4" stroke-width="1.3"/>
<circle cx="826.2" cy="857.0" r="2" fill="#050505"/>
<path d="M826.5,855.2 a1.900,1.900 0 0,1 0,3.600" fill="none" stroke="#f4f4f4" stroke-width="1.3"/>
<circle cx="820.4" cy="868.4" r="2" fill="#050505"/>
<path d="M820.7,866.6 a1.900,1.900 0 0,1 0,3.600" fill="none" stroke="#f4f4f4" stroke-width="1.3"/>
<circle cx="827.5" cy="866.9" r="2" fill="#050505"/>
<path d="M827.8,865.1 a1.900,1.900 0 0,1 0,3.600" fill="none" stroke="#f4f4f4" stroke-width="1.3"/>
<circle cx="816" cy="731" r="0.800" fill="#222"/>
<circle cx="818" cy="741" r="0.800" fill="#222"/>
<circle cx="819.5" cy="751" r="0.800" fill="#222"/>
<circle cx="833" cy="845" r="0.800" fill="#222"/>
<circle cx="835" cy="855" r="0.800" fill="#222"/>
<circle cx="836.5" cy="865" r="0.800" fill="#222"/>
<polygon points="820,661 823,660 1158.3,629 1199,902 1157,906 1020,917 904,926 860,934" fill="#868686" stroke="#000" stroke-width="1.3" />
<polygon points="860,934 904,926 1020,917 1021,931 985,938 867,952 863,951" fill="#7c7c7c" stroke="#000" stroke-width="1.3" />
<polyline points="904,926 904,930 862,938" fill="none" stroke="#000" stroke-width="1.3" />
<polygon points="1020,917 1157,901 1158,906 1075,923 1021,931" fill="#f2f2f2" stroke="#000" stroke-width="1.3" />
<polyline points="1075,917 1157,904" fill="none" stroke="#888" stroke-width="1.3" />
<polygon points="944,951.5 1021,931 1075,923 1158,906 1199,902 1173,912" fill="#7c7c7c" stroke="#000" stroke-width="1.3" />
<polygon points="867,952 985,938 985,940.5 945,951 869,961" fill="#f2f2f2" stroke="#000" stroke-width="1.3" />
<polygon points="902,957 945,951.5 945,955 903,960.5" fill="#888" stroke="#000" stroke-width="1.3" />
<polygon points="875,891 1174,863.5 1175,868.5 876,896.5" fill="#6c6f6b" stroke="#000" stroke-width="1.3" />
<polygon points="847.5,695.5 1145,669 1174,863.5 875,891" fill="#525650" stroke="#000" stroke-width="1.3" />
<polyline points="850,697.5 877,889" fill="none" stroke="#000" stroke-width="1.3" stroke-dasharray="3 2"/>
<polyline points="1142,671 1171,862" fill="none" stroke="#000" stroke-width="1.3" stroke-dasharray="3 2"/>
<circle cx="853" cy="702.5" r="2.300" fill="#777" stroke="#000" stroke-width="1.3"/><circle cx="853" cy="702.5" r="0.900" fill="#222"/>
<circle cx="1139.5" cy="676" r="2.300" fill="#777" stroke="#000" stroke-width="1.3"/><circle cx="1139.5" cy="676" r="0.900" fill="#222"/>
<circle cx="1166.5" cy="858" r="2.300" fill="#777" stroke="#000" stroke-width="1.3"/><circle cx="1166.5" cy="858" r="0.900" fill="#222"/>
<circle cx="880.5" cy="885" r="2.300" fill="#777" stroke="#000" stroke-width="1.3"/><circle cx="880.5" cy="885" r="0.900" fill="#222"/>
<polygon points="871,708 1006,695 1029,847 894,862" fill="#4e524d" stroke="#000" stroke-width="1.3" />
<polygon points="871,708 971,699 971.5,702.5 872,711.5" fill="#3f423e" stroke="#000" stroke-width="1.3" />
<polygon points="971,699 1006,695 1029,847 994,853" fill="#919b91" stroke="#000" stroke-width="1.3" />
<polyline points="872,711.5 895,861" fill="none" stroke="#000" stroke-width="1.3" />
<polygon points="1044,702.5 1080,699.5 1087.5,749 1051.5,753" fill="#525650" stroke="#000" stroke-width="1.3" />
<polygon points="1068,703.7 1080,700 1087.5,749 1075,750" fill="#919b91" stroke="#000" stroke-width="1.3" />
<polygon points="1045.6,711.5 1066,709.8 1071,744 1050.7,747.6" fill="#a80f0f" stroke="#000" stroke-width="1.3" />
<ellipse cx="1056" cy="729" rx="10" ry="16" fill="#e8e000" stroke="#000" stroke-width="1.3" transform="rotate(-8 1056 729)"/>
<ellipse cx="1061.500" cy="727" rx="10.500" ry="16" fill="url(#redk)" stroke="#000" stroke-width="1.3" transform="rotate(-8 1061.500 727)"/>
<path d="M1052,729 L1070,725 M1063,712 L1067,741" fill="none" stroke="#500" stroke-width="1.3"/>
<path d="M1065,716 l1,4 M1066.500,723 l1,4" stroke="#000" stroke-width="1.5"/>
<polygon points="1051,779 1097,775 1099.5,778 1098,780.5 1054,784.5" fill="#7b837b" stroke="#000" stroke-width="1.3" />
<polygon points="1051,779 1055,778.7 1057,784.2 1054,784.5" fill="#9aa29a" stroke="none" stroke-width="1.3" />
<polygon points="1053.35,794.1 1099.35,790.1 1101.85,793.1 1100.35,795.6 1056.35,799.6" fill="#7b837b" stroke="#000" stroke-width="1.3" />
<polygon points="1053.35,794.1 1057.35,793.8 1059.35,799.3 1056.35,799.6" fill="#9aa29a" stroke="none" stroke-width="1.3" />
<polygon points="1055.7,809.2 1101.7,805.2 1104.2,808.2 1102.7,810.7 1058.7,814.7" fill="#7b837b" stroke="#000" stroke-width="1.3" />
<polygon points="1055.7,809.2 1059.7,808.9 1061.7,814.4 1058.7,814.7" fill="#9aa29a" stroke="none" stroke-width="1.3" />
<polygon points="1058.05,824.3 1104.05,820.3 1106.55,823.3 1105.05,825.8 1061.05,829.8" fill="#7b837b" stroke="#000" stroke-width="1.3" />
<polygon points="1058.05,824.3 1062.05,824 1064.05,829.5 1061.05,829.8" fill="#9aa29a" stroke="none" stroke-width="1.3" />
<polygon points="1060.4,839.4 1106.4,835.4 1108.9,838.4 1107.4,840.9 1063.4,844.9" fill="#7b837b" stroke="#000" stroke-width="1.3" />
<polygon points="1060.4,839.4 1064.4,839.1 1066.4,844.6 1063.4,844.9" fill="#9aa29a" stroke="none" stroke-width="1.3" />
<polygon points="1062.75,854.5 1108.75,850.5 1111.25,853.5 1109.75,856 1065.75,860" fill="#7b837b" stroke="#000" stroke-width="1.3" />
<polygon points="1062.75,854.5 1066.75,854.2 1068.75,859.7 1065.75,860" fill="#9aa29a" stroke="none" stroke-width="1.3" />
<polygon points="875.5,734 897,731 899,747 878,750" fill="url(#cyl)" stroke="#000" stroke-width="1.3" />
<ellipse cx="880" cy="741" rx="5" ry="7.500" fill="#e4e4e4" stroke="#000" stroke-width="1.3"/><ellipse cx="879" cy="741" rx="3" ry="4.500" fill="#fff" stroke="#000" stroke-width="1.3"/><ellipse cx="878.500" cy="741" rx="1.300" ry="2.200" fill="#222"/>
<polyline points="886,733 888,749" fill="none" stroke="#000" stroke-width="1.3" />
<polyline points="891,732.5 893,748.5" fill="none" stroke="#000" stroke-width="1.3" />
<polygon points="895,730 927,726.5 929.5,745 897.5,749.5" fill="#d4d4d4" stroke="#000" stroke-width="1.3" />
<polygon points="899,735 905,734.3 906.5,746 900.5,747" fill="#f4f4f4" stroke="#000" stroke-width="1.3" />
<polygon points="910,729 921,727.5 922.5,741 911.5,742.5" fill="#bcbcbc" stroke="#000" stroke-width="1.3" />
<polygon points="928,727 946,725 948,741 930,744" fill="#a4a4a4" stroke="#000" stroke-width="1.3" />
<polygon points="931,722 943,720.5 944,726 932,727.5" fill="#c8c8c8" stroke="#000" stroke-width="1.3" />
<polygon points="931,744 948,741.5 949.5,752 932.5,754.5" fill="#e0e0e0" stroke="#000" stroke-width="1.3" />
<polygon points="933,754.5 949,752 949.5,765 946,770 938,771 934.5,766" fill="#1a1a1a" stroke="#000" stroke-width="1.3" />
<path d="M937,756 l1,13 M940.500,755.500 l1,13 M944,755 l1,13" stroke="#e8e8e8" stroke-width="1.3"/>
<polygon points="945,727 985,722 987,742 947,747" fill="#c8c8c8" stroke="#000" stroke-width="1.3" />
<polygon points="896.5,750 930,745.5 931,755 897.5,759.5" fill="#f4f4f4" stroke="#000" stroke-width="1.3" />
<polygon points="898,759.5 931,755 934,800 931,806 908,809.5 904,803.5" fill="url(#cyl)" stroke="#000" stroke-width="1.3" />
<polygon points="952.5,745.5 986,741.5 987,751 953.5,755" fill="#f4f4f4" stroke="#000" stroke-width="1.3" />
<polygon points="954,755 987,751 989.5,795 986,801 963,804 959.5,798" fill="url(#cyl)" stroke="#000" stroke-width="1.3" />
<polyline points="903,796 933,792" fill="none" stroke="#999" stroke-width="1.3" />
<polyline points="959,791 989,787" fill="none" stroke="#999" stroke-width="1.3" />
<polygon points="913.5,762 917,761.5 921.5,796.5 918,797" fill="#fff" stroke="#000" stroke-width="1.3" />
<polygon points="969.5,757 973,756.5 977.5,791.5 974,792" fill="#fff" stroke="#000" stroke-width="1.3" />
<polygon points="922,758 929,757 930,766 923,767" fill="#e0e0e0" stroke="#000" stroke-width="1.3" />
<polygon points="923.5,769 930.5,768 931,776 924,777" fill="#1a1a1a" stroke="#000" stroke-width="1.3" />
<polygon points="978,754 986,753 987,762 979,763" fill="#e0e0e0" stroke="#000" stroke-width="1.3" />
<polygon points="979.5,765 987.5,764 988,772 980,773" fill="#1a1a1a" stroke="#000" stroke-width="1.3" />
<ellipse cx="926.500" cy="762" rx="2" ry="2.800" fill="#aaa" stroke="#000" stroke-width="1.3"/><ellipse cx="982.500" cy="758" rx="2" ry="2.800" fill="#aaa" stroke="#000" stroke-width="1.3"/>
<polygon points="917.5,808 924.5,807 925,812.5 918,813.5" fill="#f0f0f0" stroke="#000" stroke-width="1.3" />
<polygon points="962,718.5 969,717.5 970,724 963,725" fill="#f4f4f4" stroke="#000" stroke-width="1.3" />
<ellipse cx="960.500" cy="735" rx="13" ry="14" fill="#ececec" stroke="#000" stroke-width="1.3"/><ellipse cx="962" cy="735.200" rx="10.500" ry="12" fill="#fafafa" stroke="#000" stroke-width="1.3"/><ellipse cx="963.500" cy="735.500" rx="8" ry="10" fill="#9c9c9c" stroke="#000" stroke-width="1.3"/>
<polygon points="963.5,731 966,738 961,738" fill="#e8e8e8" stroke="#000" stroke-width="1.3" />
<polygon points="973,728.7 983.5,727.5 985,739 974.5,740.5" fill="#8a8a8a" stroke="#000" stroke-width="1.3" />
<polygon points="983,730.5 989,730 990,738.5 984,739.5" fill="#1a1a1a" stroke="none" stroke-width="1.3" />
<ellipse cx="991" cy="734" rx="3" ry="4.800" fill="#f08a1a"/>
<polygon points="996.6,811 1018,809.4 1022.4,843 997.5,849" fill="#5a1fc8" stroke="#000" stroke-width="1.3" />
<polygon points="1002,816 1014,814.5 1017.5,839 1005,842" fill="#3a1096" stroke="#000" stroke-width="1.3" />
<circle cx="999.5" cy="814" r="1.300" fill="#2a0a70"/>
<circle cx="1016" cy="812" r="1.300" fill="#2a0a70"/>
<circle cx="1019.5" cy="840.5" r="1.300" fill="#2a0a70"/>
<circle cx="1000.5" cy="845.5" r="1.300" fill="#2a0a70"/>
<polygon points="965,821.5 995,810.5 1003,817 974,829" fill="#5a1fc8" stroke="#000" stroke-width="1.3" />
<polygon points="978,820.5 996,817 1000,843.5 982,846.5" fill="#141414" stroke="#000" stroke-width="1.3" />
<path d="M981,823 l3,22 M984.500,822 l3,22 M988,821.500 l3,22 M991.500,821 l3,22 M980,829 l16,-3 M981,836 l16,-3" stroke="#e8e8e8" stroke-width="1.3"/>
<ellipse cx="997" cy="831" rx="5.500" ry="14" fill="url(#cyl)" stroke="#000" stroke-width="1.3" transform="rotate(-8 997 831)"/>
<ellipse cx="1004" cy="829" rx="6.500" ry="13.500" fill="#5a1fc8" stroke="#000" stroke-width="1.3" transform="rotate(-8 1004 829)"/>
<ellipse cx="1007" cy="828.500" rx="5" ry="11.500" fill="#3a1096" stroke="#000" stroke-width="1.3" transform="rotate(-8 1007 828.500)"/>
<polygon points="966,822.5 978,820.5 981,843 969,843.5" fill="url(#cyl)" stroke="#000" stroke-width="1.3" />
<ellipse cx="967.500" cy="833" rx="7.500" ry="10.500" fill="#ececec" stroke="#000" stroke-width="1.3"/><ellipse cx="964.500" cy="833" rx="4.500" ry="6" fill="#fff" stroke="#000" stroke-width="1.3"/><ellipse cx="964" cy="833" rx="2" ry="2.800" fill="#fff" stroke="#000" stroke-width="1.3"/>
<polygon points="486,724 816.5,657.5 817,664.6 664.5,699.5 663,696 642,699.7 641,704.5 487,731" fill="#7b7b7b" stroke="#000" stroke-width="1.3" />
<polygon points="816.5,657.5 822,656 822.5,663.5 817,664.6" fill="#6a6a6a" stroke="#000" stroke-width="1.3" />
<polygon points="822,656 1157,625 1158.3,632.3 997,652 822.5,663.5" fill="#4b4d4a" stroke="#000" stroke-width="1.3" />
<polygon points="1133,634.5 1140,634 1140,638 1133,638.5" fill="#fff" stroke="none" stroke-width="1.3" />
<polygon points="506,727.5 512.5,726.3 513,730.3 506.5,731.5" fill="#686868" stroke="#000" stroke-width="1.3" />
<polygon points="793,668 799.5,666.7 800,670.7 793.5,672" fill="#686868" stroke="#000" stroke-width="1.3" />
<polygon points="842,661 848.5,660.4 848.5,665 842,665.6" fill="#7c7c7c" stroke="#000" stroke-width="1.3" />
<polygon points="1250,465 1299,440 1310,436 1262,464" fill="#6a6a6a" stroke="#000" stroke-width="1.3" />
<polygon points="1281,291 1294,290 1310,436 1299,440" fill="#8d8d8d" stroke="#000" stroke-width="1.3" />
<polygon points="1234,316 1281,291 1299,440 1250,465" fill="#848484" stroke="#000" stroke-width="1.3" />
<polygon points="1239,338 1276,319 1288,420 1252,438" fill="#8a8a8a" stroke="#000" stroke-width="1.3" />
<polygon points="1276,319 1278,319 1290,419 1288,420" fill="#777" stroke="#000" stroke-width="1.3" />
<polygon points="1252,438 1288,420 1290,419 1254,437.5" fill="#666" stroke="#000" stroke-width="1.3" />
<polygon points="1236,420 1262,410 1279,410 1250,426" fill="#444" stroke="#000" stroke-width="1.3" />
<polygon points="1255,340 1271,331 1279,410 1262,410" fill="#9a9a9a" stroke="#000" stroke-width="1.3" />
<polygon points="1229.5,351 1255,340 1262,410 1236,420" fill="#888" stroke="#000" stroke-width="1.3" />
<polygon points="1236,355 1248,349 1254,403 1242,409" fill="#1f6a23" stroke="#000" stroke-width="1.3" />
<path d="M1194,365 L1211,357 L1222.500,445 L1229,518 Q1231,533 1246,533.500 L1290,529 L1329,510 L1331,514 L1320,539 Q1306,552 1295,554 L1228,560 Q1207,556 1199,537 L1194,500 L1190,477.500 Q1190,455 1203,444Z" fill="#2f8232" stroke="#000" stroke-width="1.3"/>
<path d="M1197.500,366 L1207,447 Q1200,455 1201.500,470 L1205,520 Q1208,545 1228,551 L1295,546 Q1308,543 1318,535" fill="none" stroke="#000" stroke-width="1.3"/>
<polyline points="1202,364 1213,449" fill="none" stroke="#000" stroke-width="1.3" stroke-dasharray="3 2"/>
<polyline points="1225,551 1225,560" fill="none" stroke="#000" stroke-width="1.3" />
<polyline points="1210,537 1198,540" fill="none" stroke="#000" stroke-width="1.3" />
<ellipse cx="1201" cy="484" rx="3.500" ry="11" fill="#3a9a3e" stroke="#000" stroke-width="1.3" transform="rotate(-5 1201 484)"/>
<polygon points="1213,371 1240,368 1242,393 1216,396" fill="url(#gcyl)" stroke="#000" stroke-width="1.3" />
<ellipse cx="1245" cy="381" rx="6.500" ry="19" fill="#33a038" stroke="#000" stroke-width="1.3" transform="rotate(-7 1245 381)"/>
<ellipse cx="1242" cy="381" rx="4" ry="13.500" fill="#2f8f33" stroke="#000" stroke-width="1.3" transform="rotate(-7 1242 381)"/>
<polygon points="1329,517 1434,509 1438.4,507.3 1421,517.5 1325,526" fill="#163a16" stroke="#000" stroke-width="1.3" />
<polygon points="1325,526 1421,517.5 1391,533 1319,539" fill="#2f8232" stroke="#000" stroke-width="1.3" />
<polyline points="1324,529.5 1414,521.5" fill="none" stroke="#123212" stroke-width="2" />
<polyline points="1322,534 1404,527" fill="none" stroke="#123212" stroke-width="2" />
<polygon points="1319,539 1391,533 1391.5,536.5 1318,543" fill="#1b4f1d" stroke="#000" stroke-width="1.3" />
<polygon points="1418.7,539.7 1439.4,529 1439.4,517.2 1448.7,516.2 1449.7,528.4 1430,536" fill="#2f8232" stroke="#000" stroke-width="1.3" />
<polygon points="1422,534 1428,532.5 1428.5,537 1422.5,538.5" fill="#3aa83e" stroke="#000" stroke-width="1.3" />
<polygon points="1390,535 1438.4,508.3 1439,524.7 1392,549.5" fill="#2f8232" stroke="#000" stroke-width="1.3" />
<circle cx="1404" cy="533.5" r="1.2" fill="#000"/><circle cx="1424.5" cy="525" r="1.4" fill="#000"/>
<polygon points="1330,516.2 1392.5,508.7 1399.5,508.5 1400,511.8 1330,518" fill="#2f8232" stroke="#000" stroke-width="1.3" />
<polygon points="1329.7,511 1392.5,504 1392.5,508.7 1330,516.2" fill="#6e0404" stroke="#000" stroke-width="1.3" />
<polygon points="1333.5,509.5 1340,508.8 1340.3,514 1333.8,514.8" fill="#3aa83e" stroke="#000" stroke-width="1.3" />
<polygon points="1392.5,504.2 1399,503.5 1399.5,508.5 1393,509.3" fill="#3aa83e" stroke="#000" stroke-width="1.3" />
<polyline points="1333,508 1394,501.5" fill="none" stroke="#ddd" stroke-width="1.8" stroke-dasharray="3 4"/>
<polyline points="1124,524.5 1187.5,514.5" fill="none" stroke="#000" stroke-width="3.4" />
<polyline points="1127.5,537.5 1187.5,527.5" fill="none" stroke="#000" stroke-width="3.4" />
<polyline points="1124,524.5 1187.5,514.5" fill="none" stroke="#2f9a34" stroke-width="1.4" stroke-dasharray="1.5 3"/>
<polyline points="1127.5,537.5 1187.5,527.5" fill="none" stroke="#2f9a34" stroke-width="1.4" stroke-dasharray="1.5 3"/>
<polygon points="1183,503 1203,500 1204,506 1184,509" fill="#37a03b" stroke="#000" stroke-width="1.3" />
<polygon points="1185,510 1199,508 1201,525 1188,527" fill="url(#gcyl)" stroke="#000" stroke-width="1.3" />
<polygon points="1122.7,525.5 1137.5,523.5 1139.5,540.5 1124.5,542.5" fill="url(#gcyl)" stroke="#000" stroke-width="1.3" />
<polygon points="1124.5,543.5 1139.5,541.5 1141.5,559 1126.5,561" fill="url(#gcyl)" stroke="#000" stroke-width="1.3" />
<polyline points="1123,531 1138.5,529" fill="none" stroke="#000" stroke-width="2.5" />
<polyline points="1124,538 1139,536" fill="none" stroke="#000" stroke-width="2.5" />
<polygon points="1126.6,562 1143,560 1144.5,567.5 1130,569.5" fill="#1b4f1d" stroke="#000" stroke-width="1.3" />
<polygon points="1124,572.5 1146,569.5 1147.5,585 1126.5,588.5" fill="#2f8232" stroke="#000" stroke-width="1.3" />
<polyline points="1131,571.5 1133,587.5" fill="none" stroke="#000" stroke-width="1.3" />
<polyline points="1125,577 1147,574" fill="none" stroke="#000" stroke-width="1.3" />
<path d="M1114.400,550 Q1114,547.500 1117.500,547 Q1120.800,546.800 1121.200,549.500 L1130.400,612.500 Q1130.500,616 1127,616.300 Q1123.800,616.500 1123.400,613.500Z" fill="#37a03b" stroke="#000" stroke-width="1.3"/>
<polygon points="1127.3,592 1139,590.5 1141,609 1138,613.5 1129.5,614.5" fill="#2f8232" stroke="#000" stroke-width="1.3" />
<ellipse cx="1134" cy="603" rx="1.700" ry="2.300" fill="#1b4f1d" stroke="#000" stroke-width="1.3"/>
<g transform="translate(1083,921.5) scale(1.0)"><polygon points="0,0 56,-3.500 57,0 1,3.500" fill="#237028" stroke="#000" stroke-width="1.3"/><path d="M22,11 A14,20 0 0,0 22,51 L36,50 A14,20 0 0,0 36,10Z" fill="url(#wheel)" stroke="#000" stroke-width="1.3"/><ellipse cx="22" cy="31" rx="14" ry="20" fill="#2f8232" stroke="#000" stroke-width="1.3"/><polygon points="9,3.500 37,1.500 33,12 23,34 17,37 12,31" fill="#2f8232" stroke="#000" stroke-width="1.3"/><polyline points="12,6 17,33 31,8" fill="none" stroke="#000" stroke-width="1.3"/><circle cx="19" cy="32" r="2.500" fill="#1b4f1d" stroke="#000" stroke-width="1.3"/><polygon points="37,1.500 56,0 56,7 48,9 45,22 40,14 42,6" fill="#2a7a2e" stroke="#000" stroke-width="1.3"/></g>
<g transform="translate(802,948.5) scale(1.1)"><polygon points="0,0 56,-3.500 57,0 1,3.500" fill="#237028" stroke="#000" stroke-width="1.3"/><path d="M22,11 A14,20 0 0,0 22,51 L36,50 A14,20 0 0,0 36,10Z" fill="url(#wheel)" stroke="#000" stroke-width="1.3"/><ellipse cx="22" cy="31" rx="14" ry="20" fill="#2f8232" stroke="#000" stroke-width="1.3"/><polygon points="9,3.500 37,1.500 33,12 23,34 17,37 12,31" fill="#2f8232" stroke="#000" stroke-width="1.3"/><polyline points="12,6 17,33 31,8" fill="none" stroke="#000" stroke-width="1.3"/><circle cx="19" cy="32" r="2.500" fill="#1b4f1d" stroke="#000" stroke-width="1.3"/><polygon points="37,1.500 56,0 56,7 48,9 45,22 40,14 42,6" fill="#2a7a2e" stroke="#000" stroke-width="1.3"/></g>
<g transform="translate(873,968) scale(1.05)"><polygon points="0,0 56,-3.500 57,0 1,3.500" fill="#237028" stroke="#000" stroke-width="1.3"/><path d="M22,11 A14,20 0 0,0 22,51 L36,50 A14,20 0 0,0 36,10Z" fill="url(#wheel)" stroke="#000" stroke-width="1.3"/><ellipse cx="22" cy="31" rx="14" ry="20" fill="#2f8232" stroke="#000" stroke-width="1.3"/><polygon points="9,3.500 37,1.500 33,12 23,34 17,37 12,31" fill="#2f8232" stroke="#000" stroke-width="1.3"/><polyline points="12,6 17,33 31,8" fill="none" stroke="#000" stroke-width="1.3"/><circle cx="19" cy="32" r="2.500" fill="#1b4f1d" stroke="#000" stroke-width="1.3"/><polygon points="37,1.500 56,0 56,7 48,9 45,22 40,14 42,6" fill="#2a7a2e" stroke="#000" stroke-width="1.3"/></g>
<polygon points="581,994 636.5,989.5 636.5,1001 587,1001" fill="#2f8232" stroke="#000" stroke-width="1.3" />
<polygon points="615,994 634,991.5 634,1001 616,1001" fill="#2a7a2e" stroke="#000" stroke-width="1.3" />
<polygon points="856.5,934 863.5,933.5 871.5,981 864.5,981" fill="url(#cyl)" stroke="#000" stroke-width="1.3" /><polygon points="861.5,983 877.5,982 889.5,993 889.5,997 849.5,1000 849.5,996" fill="url(#cyl)" stroke="#000" stroke-width="1.3" /><ellipse cx="869.5" cy="996.5" rx="20" ry="4.500" fill="#e0e0e0" stroke="#000" stroke-width="1.3"/><polygon points="865.5,980 873.5,979.5 874.5,983 864.5,983.5" fill="#ddd" stroke="#000" stroke-width="1.3" />
<polygon points="1176.5,906 1183.5,905.5 1189.5,952 1182.5,952" fill="url(#cyl)" stroke="#000" stroke-width="1.3" /><polygon points="1179.5,954 1195.5,953 1207.5,964 1207.5,968 1167.5,971 1167.5,967" fill="url(#cyl)" stroke="#000" stroke-width="1.3" /><ellipse cx="1187.5" cy="967.5" rx="20" ry="4.500" fill="#e0e0e0" stroke="#000" stroke-width="1.3"/><polygon points="1183.5,951 1191.5,950.5 1192.5,954 1182.5,954.5" fill="#ddd" stroke="#000" stroke-width="1.3" />
<g shape-rendering="geometricPrecision">
<defs><linearGradient id="wmg" x1="0" y1="0" x2="0" y2="1"><stop offset="0" stop-color="#f07a1c"/><stop offset="1" stop-color="#f6a21e"/></linearGradient><linearGradient id="wmy" x1="0" y1="0" x2="1" y2="1"><stop offset="0" stop-color="#f7b21a"/><stop offset="1" stop-color="#f08a1e"/></linearGradient></defs>
<g fill="url(#wmg)">
<path d="M891,518.5 L893.6,517 L893.6,537 L891,537Z"/>
<path d="M895,513.5 L897.6,512 L897.6,537 L895,537Z"/>
<path d="M899.2,509.5 L901.8000000000001,508 L901.8000000000001,537 L899.2,537Z"/>
<path d="M936.4,518.5 L933.8,517 L933.8,537 L936.4,537Z"/>
<path d="M932.4,513.5 L929.8,512 L929.8,537 L932.4,537Z"/>
<path d="M928.0,509.5 L925.4,508 L925.4,537 L928.0,537Z"/>
<path d="M891,536.500 L902,536.500 Q908,536.500 911,539.800 L891,539.800Z M936.500,536.500 L925.500,536.500 Q919.500,536.500 916.500,539.800 L936.500,539.800Z"/>
<path d="M901.800,528 Q903,535 910.500,538 L909,539.500 Q901,536.500 899.500,529Z M925.700,528 Q924.500,535 917,538 L918.500,539.500 Q926.500,536.500 928,529Z"/>
<rect x="909.500" y="537.300" width="8.500" height="2.500" fill="#f0601c"/>
</g>
<path d="M913.800,510 C906.500,510.500 902.500,518 905.300,526.500 C906,520.500 908.500,517 911.800,516.500 L911.800,536.500 C919,535.500 924,529 921.300,519.500 C920.800,525.500 918,529 914.500,529.800 L914.500,510 Z" fill="url(#wmy)"/>
<text x="946.500" y="529" font-family="'Liberation Sans','Noto Sans CJK SC',sans-serif" font-size="17" font-weight="500" fill="#f28c22" textLength="82.500" lengthAdjust="spacingAndGlyphs">智造资料网</text>
<text x="947" y="538.200" font-family="'Liberation Sans',sans-serif" font-size="5.200" font-weight="bold" fill="#f28c22" textLength="82" lengthAdjust="spacingAndGlyphs">INTELLIGENT MANUFACTURING DATA</text>
</g>
<g shape-rendering="geometricPrecision">
<polygon points="98,918 135,913 137,937 100,940" fill="rgba(160,175,205,0.35)" stroke="#cfd6e6" stroke-width="1.3" />
<polyline points="120,940 110,875" fill="none" stroke="#00d8e8" stroke-width="2" />
<polygon points="109,866 106,877 114,876" fill="#00d8e8" stroke="none" stroke-width="1.3" />
<polyline points="120,940 148,936" fill="none" stroke="#10d020" stroke-width="2.6" />
<polygon points="156,934.5 145.5,931.5 147,941" fill="#10d020" stroke="none" stroke-width="1.3" />
<polyline points="120,941 104,943.5" fill="none" stroke="#c01010" stroke-width="2.6" />
<polygon points="95,944 102,939 107,942.5 103,948" fill="#e01010" stroke="none" stroke-width="1.3" />
<polyline points="104,942.5 120,940 140,936.5" fill="none" stroke="#f0e800" stroke-width="1.3" />
<circle cx="120.500" cy="942.500" r="3" fill="#6a6a6a"/><circle cx="119.500" cy="941.500" r="1.200" fill="#aaa"/>
<text x="102.500" y="864.500" font-family="'Liberation Sans',sans-serif" font-size="13" fill="#f01010">Z</text>
<text x="155" y="937.500" font-family="'Liberation Sans',sans-serif" font-size="11.500" fill="#d8dce8">Y</text>
<text x="85.500" y="948.500" font-family="'Liberation Sans',sans-serif" font-size="11.500" fill="#d8dce8">X</text>
</g></svg>
<div class="vbtn" style="left:64px;top:113px"><svg style="left:-1px;top:-1px" width="24" height="24" viewBox="0 0 24 24"><rect x="3" y="4" width="18" height="4" rx="0.500" fill="#3f5a8e"/><rect x="3" y="10" width="18" height="4" rx="0.500" fill="#3f5a8e"/><rect x="3" y="16" width="18" height="4" rx="0.500" fill="#3f5a8e"/><path d="M4,5 h16 M4,11 h16 M4,17 h16" stroke="#5a76a8" stroke-width="0.800"/></svg></div><div class="vbtn" style="left:92px;top:113px"><svg style="left:-1px;top:-1px" width="24" height="24" viewBox="0 0 24 24"><rect x="5" y="5" width="14" height="14" fill="url(#gDoc)" stroke="#8a98b8" stroke-width="0.600"/><path d="M2.3,2.3 L6.7,6.7 M6.7,2.3 L2.3,6.7" stroke="#35c020" stroke-width="1.500"/><rect x="3.2" y="3.2" width="2.600" height="2.600" fill="#35c020"/><path d="M17.3,2.3 L21.7,6.7 M21.7,2.3 L17.3,6.7" stroke="#35c020" stroke-width="1.500"/><rect x="18.2" y="3.2" width="2.600" height="2.600" fill="#35c020"/><path d="M2.3,17.3 L6.7,21.7 M6.7,17.3 L2.3,21.7" stroke="#35c020" stroke-width="1.500"/><rect x="3.2" y="18.2" width="2.600" height="2.600" fill="#35c020"/><path d="M17.3,17.3 L21.7,21.7 M21.7,17.3 L17.3,21.7" stroke="#35c020" stroke-width="1.500"/><rect x="18.2" y="18.2" width="2.600" height="2.600" fill="#35c020"/></svg></div><div class="vbtn" style="left:120px;top:113px"><svg style="left:-1px;top:-1px" width="24" height="24" viewBox="0 0 24 24"><path d="M2,9 q4,-3 8,-1 M2,13 q3,0 6,2" stroke="#c8d4e8" stroke-width="1.200" fill="none"/><path d="M10.4,14.2 L5.0,21.4" stroke="#9a9aa0" stroke-width="3" stroke-linecap="round"/><path d="M10.4,14.2 L5.0,21.4" stroke="#d8d8dc" stroke-width="1.200" stroke-linecap="round"/><circle cx="14" cy="10" r="6" fill="url(#gLens)" stroke="#8a8e98" stroke-width="1.600"/></svg></div><div class="vbtn" style="left:148px;top:113px"><svg style="left:-1px;top:-1px" width="24" height="24" viewBox="0 0 24 24"><polygon points="2,16 12,11 22,16 12,21" fill="rgba(200,210,230,0.35)" stroke="#b0b8cc" stroke-width="0.500"/><path d="M11,15 V5" stroke="#1a5fe0" stroke-width="2"/><polygon points="11,1.500 8,6.500 14,6.500" fill="#1a5fe0"/><path d="M11,15 L17,9" stroke="#22b830" stroke-width="2"/><path d="M11,15 L18,20" stroke="#e02020" stroke-width="2"/><polygon points="20.500,22 15,20.500 18.500,16.500" fill="#e02020"/><circle cx="11" cy="15" r="1.800" fill="#eee" stroke="#555" stroke-width="0.500"/></svg></div><div class="vbtn" style="left:176px;top:113px"><svg style="left:-1px;top:-1px" width="24" height="24" viewBox="0 0 24 24"><path d="M12.2,2.5 L12.2,13.3 M12.2,13.3 L3.5,16.7 M12.2,13.3 L21.8,16.7 " fill="none" stroke="#000" stroke-width="1.100"/><polygon points="12.2,2.5 21.8,6.3 12.2,10.3 3.5,6.3" fill="url(#gCubeT)"/><path d="M12.2,2.5 L21.8,6.3 M21.8,6.3 L21.8,16.7 M21.8,16.7 L12.2,21.7 M12.2,21.7 L3.5,16.7 M3.5,16.7 L3.5,6.3 M3.5,6.3 L12.2,2.5 M3.5,6.3 L12.2,10.3 M12.2,10.3 L21.8,6.3 M12.2,10.3 L12.2,21.7 " fill="none" stroke="#000" stroke-width="1.400" stroke-linejoin="round"/></svg></div><div class="vbtn" style="left:204px;top:113px"><svg style="left:-1px;top:-1px" width="24" height="24" viewBox="0 0 24 24"><path d="M12.2,2.5 L12.2,13.3 M12.2,13.3 L3.5,16.7 M12.2,13.3 L21.8,16.7 " fill="none" stroke="#000" stroke-width="1.100"/><polygon points="3.5,16.7 12.2,13.3 21.8,16.7 12.2,21.7" fill="url(#gCubeT)"/><path d="M12.2,2.5 L21.8,6.3 M21.8,6.3 L21.8,16.7 M21.8,16.7 L12.2,21.7 M12.2,21.7 L3.5,16.7 M3.5,16.7 L3.5,6.3 M3.5,6.3 L12.2,2.5 M3.5,6.3 L12.2,10.3 M12.2,10.3 L21.8,6.3 M12.2,10.3 L12.2,21.7 " fill="none" stroke="#000" stroke-width="1.400" stroke-linejoin="round"/></svg></div><div class="vbtn" style="left:232px;top:113px"><svg style="left:-1px;top:-1px" width="24" height="24" viewBox="0 0 24 24"><path d="M12.2,2.5 L12.2,13.3 M12.2,13.3 L3.5,16.7 M12.2,13.3 L21.8,16.7 " fill="none" stroke="#000" stroke-width="1.100"/><polygon points="3.5,6.3 12.2,2.5 12.2,13.3 3.5,16.7" fill="url(#gCubeT)"/><path d="M12.2,2.5 L21.8,6.3 M21.8,6.3 L21.8,16.7 M21.8,16.7 L12.2,21.7 M12.2,21.7 L3.5,16.7 M3.5,16.7 L3.5,6.3 M3.5,6.3 L12.2,2.5 M3.5,6.3 L12.2,10.3 M12.2,10.3 L21.8,6.3 M12.2,10.3 L12.2,21.7 " fill="none" stroke="#000" stroke-width="1.400" stroke-linejoin="round"/></svg></div><div class="vbtn" style="left:260px;top:113px"><svg style="left:-1px;top:-1px" width="24" height="24" viewBox="0 0 24 24"><path d="M12.2,2.5 L12.2,13.3 M12.2,13.3 L3.5,16.7 M12.2,13.3 L21.8,16.7 " fill="none" stroke="#000" stroke-width="1.100"/><polygon points="12.2,10.3 21.8,6.3 21.8,16.7 12.2,21.7" fill="url(#gCubeT)"/><path d="M12.2,2.5 L21.8,6.3 M21.8,6.3 L21.8,16.7 M21.8,16.7 L12.2,21.7 M12.2,21.7 L3.5,16.7 M3.5,16.7 L3.5,6.3 M3.5,6.3 L12.2,2.5 M3.5,6.3 L12.2,10.3 M12.2,10.3 L21.8,6.3 M12.2,10.3 L12.2,21.7 " fill="none" stroke="#000" stroke-width="1.400" stroke-linejoin="round"/></svg></div><div class="vbtn" style="left:288px;top:113px"><svg style="left:-1px;top:-1px" width="24" height="24" viewBox="0 0 24 24"><path d="M12.2,2.5 L12.2,13.3 M12.2,13.3 L3.5,16.7 M12.2,13.3 L21.8,16.7 " fill="none" stroke="#000" stroke-width="1.100"/><polygon points="3.5,6.3 12.2,10.3 12.2,21.7 3.5,16.7" fill="url(#gCubeT)"/><path d="M12.2,2.5 L21.8,6.3 M21.8,6.3 L21.8,16.7 M21.8,16.7 L12.2,21.7 M12.2,21.7 L3.5,16.7 M3.5,16.7 L3.5,6.3 M3.5,6.3 L12.2,2.5 M3.5,6.3 L12.2,10.3 M12.2,10.3 L21.8,6.3 M12.2,10.3 L12.2,21.7 " fill="none" stroke="#000" stroke-width="1.400" stroke-linejoin="round"/></svg></div><div class="vbtn" style="left:316px;top:113px"><svg style="left:-1px;top:-1px" width="24" height="24" viewBox="0 0 24 24"><path d="M12.2,2.5 L12.2,13.3 M12.2,13.3 L3.5,16.7 M12.2,13.3 L21.8,16.7 " fill="none" stroke="#000" stroke-width="1.100"/><polygon points="12.2,2.5 21.8,6.3 21.8,16.7 12.2,13.3" fill="url(#gCubeT)"/><path d="M12.2,2.5 L21.8,6.3 M21.8,6.3 L21.8,16.7 M21.8,16.7 L12.2,21.7 M12.2,21.7 L3.5,16.7 M3.5,16.7 L3.5,6.3 M3.5,6.3 L12.2,2.5 M3.5,6.3 L12.2,10.3 M12.2,10.3 L21.8,6.3 M12.2,10.3 L12.2,21.7 " fill="none" stroke="#000" stroke-width="1.400" stroke-linejoin="round"/></svg></div><div class="vbtn" style="left:344px;top:113px"><svg style="left:-1px;top:-1px" width="24" height="24" viewBox="0 0 24 24"><polygon points="12.2,2.5 21.8,6.3 12.2,10.3 3.5,6.3" fill="#5ee84e"/><polygon points="3.5,6.3 12.2,10.3 12.2,21.7 3.5,16.7" fill="#34c428"/><polygon points="12.2,10.3 21.8,6.3 21.8,16.7 12.2,21.7" fill="#249a1c"/><path d="M12.2,2.5 L21.8,6.3 M21.8,6.3 L21.8,16.7 M21.8,16.7 L12.2,21.7 M12.2,21.7 L3.5,16.7 M3.5,16.7 L3.5,6.3 M3.5,6.3 L12.2,2.5 M3.5,6.3 L12.2,10.3 M12.2,10.3 L21.8,6.3 M12.2,10.3 L12.2,21.7 " fill="none" stroke="#1c8a18" stroke-width="0.800"/></svg></div><div class="vbtn" style="left:64px;top:141px"><svg style="left:-1px;top:-1px" width="24" height="24" viewBox="0 0 24 24"><path d="M7.0,5.5 L7.0,18.5 A5.0,2.0 0 0,0 17.0,18.5 L17.0,5.5 A5.0,2.0 0 0,0 7.0,5.5Z" fill="none" stroke="#222" stroke-width="1.0"/><ellipse cx="12" cy="5.5" rx="5.0" ry="2.0" fill="none" stroke="#222" stroke-width="1.0"/><path d="M7.0,18.5 A5.0,2.0 0 0,1 17.0,18.5" fill="none" stroke="#222" stroke-width="0.7"/></svg></div><div class="vbtn" style="left:64px;top:169px"><svg style="left:-1px;top:-1px" width="24" height="24" viewBox="0 0 24 24"><path d="M7.0,5.5 L7.0,18.5 A5.0,2.0 0 0,0 17.0,18.5 L17.0,5.5 A5.0,2.0 0 0,0 7.0,5.5Z" fill="none" stroke="#222" stroke-width="1.0"/><ellipse cx="12" cy="5.5" rx="5.0" ry="2.0" fill="none" stroke="#222" stroke-width="1.0"/></svg></div><div class="vbtn on" style="left:64px;top:197px"><svg style="left:-1px;top:-1px" width="24" height="24" viewBox="0 0 24 24"><ellipse cx="16" cy="20.0" rx="7.0" ry="2.0" fill="rgba(60,60,80,0.45)"/><path d="M7.0,5.5 L7.0,18.5 A5.0,2.0 0 0,0 17.0,18.5 L17.0,5.5 A5.0,2.0 0 0,0 7.0,5.5Z" fill="url(#gBlue)" stroke="#16224a" stroke-width="1.0"/><ellipse cx="12" cy="5.5" rx="5.0" ry="2.0" fill="#8fb0ea" stroke="#16224a" stroke-width="1.0"/></svg></div><div class="vbtn" style="left:64px;top:225px"><svg style="left:-1px;top:-1px" width="24" height="24" viewBox="0 0 24 24"><ellipse cx="16" cy="20.0" rx="7.0" ry="2.0" fill="rgba(60,60,80,0.45)"/><path d="M7.0,5.5 L7.0,18.5 A5.0,2.0 0 0,0 17.0,18.5 L17.0,5.5 A5.0,2.0 0 0,0 7.0,5.5Z" fill="url(#gPale)" stroke="#4a5068" stroke-width="0.9"/><ellipse cx="12" cy="5.5" rx="5.0" ry="2.0" fill="#eef2fb" stroke="#4a5068" stroke-width="0.9"/></svg></div><div class="vbtn" style="left:64px;top:253px"><svg style="left:-1px;top:-1px" width="24" height="24" viewBox="0 0 24 24"><path d="M7.0,5.5 L7.0,18.5 A5.0,2.0 0 0,0 17.0,18.5 L17.0,5.5 A5.0,2.0 0 0,0 7.0,5.5Z" fill="#e8e8ee" stroke="#222" stroke-width="0.9"/><ellipse cx="12" cy="5.5" rx="5.0" ry="2.0" fill="#e8e8ee" stroke="#222" stroke-width="0.9"/><path d="M8,6 L11,20 M10,5 L15,20 M14,5 L9,20 M16,6 L13,20 M7.500,12 L16.500,11" stroke="#222" stroke-width="0.600" fill="none"/></svg></div>
<div id="status" class="abs"><div class="abs" style="left:2px;top:19px;width:1918px;height:1px;background:#a0a0a0"></div><div class="abs" style="left:1334px;top:3px;width:6px;height:15px;background-image:radial-gradient(circle at 1px 1px,#9aa0b0 0.700px,transparent 1px);background-size:3px 3px"></div><div class="abs" style="left:1341px;top:2px;width:131px;height:17px;background:#fff"></div><div class="st" style="left:1484px;top:3px">绝对 XY 上视图</div><div class="sep" style="left:1592px;top:3px;height:14px"></div><div class="st" style="left:1601.500px;top:3px">绝对视图</div><div class="abs" style="left:1655px;top:3px;width:6px;height:15px;background-image:radial-gradient(circle at 1px 1px,#9aa0b0 0.700px,transparent 1px);background-size:3px 3px"></div><div class="st" style="left:1668px;top:3px;font-weight:bold;letter-spacing:-0.100px">LAYER0</div><div class="sep" style="left:1726px;top:3px;height:14px"></div><div class="sep" style="left:1757px;top:3px;height:14px"></div><div class="sep" style="left:1800px;top:3px;height:14px"></div><div class="sep" style="left:1843px;top:3px;height:14px"></div><div class="sep" style="left:1886px;top:3px;height:14px"></div><div class="abs" style="left:1762px;top:4px;width:32px;height:12px;background:#4a6189"></div><div class="abs" style="left:1805px;top:4px;width:32px;height:12px;background:#4a6189"></div><div class="abs" style="left:1848px;top:4px;width:32px;height:12px;background:#4a6189"></div><svg style="left:1893.5px;top:2px" width="14" height="14" viewBox="0 0 14 14"><circle cx="7" cy="7" r="6.500" fill="#1828c0"/><path d="M2,5 q3,-4 6,-3 q1,2 -1,3 q-2,0 -2,3 q-2,0 -3,-3Z M8,8 q3,-2 5,0 q-1,4 -4,5 q-2,-2 -1,-5Z" fill="#28c828"/><circle cx="5" cy="4" r="1.500" fill="rgba(255,255,255,0.5)"/></svg><div class="sep" style="left:1132px;top:22px;height:14px;background:#8a8a8a"></div><div class="sep" style="left:1176px;top:22px;height:14px;background:#8a8a8a"></div><div class="sep" style="left:1206px;top:22px;height:14px;background:#8a8a8a"></div><div class="sep" style="left:1238px;top:22px;height:14px;background:#8a8a8a"></div><div class="sep" style="left:1269px;top:22px;height:14px;background:#8a8a8a"></div><div class="sep" style="left:1300px;top:22px;height:14px;background:#8a8a8a"></div><div class="sep" style="left:1331px;top:22px;height:14px;background:#8a8a8a"></div><div class="sep" style="left:1362px;top:22px;height:14px;background:#8a8a8a"></div><div class="sep" style="left:1393px;top:22px;height:14px;background:#8a8a8a"></div><div class="sep" style="left:1424px;top:22px;height:14px;background:#8a8a8a"></div><div class="sep" style="left:1578px;top:22px;height:14px;background:#8a8a8a"></div><div class="sep" style="left:1654px;top:22px;height:14px;background:#8a8a8a"></div><div class="st" style="left:1141px;top:23px">拴牢</div><div class="abs" style="left:1182px;top:21px;width:17px;height:17px;background:#9aa0b8;border:1px solid #6a7088"></div><svg style="left:1183px;top:22px" width="15" height="15" viewBox="0 0 24 24"><path d="M5,11 A7,5.6000000000000005 0 0,1 17.5,8.5" fill="none" stroke="#e84858" stroke-width="3.4"/><path d="M14.5,5.5 L20.5,5 L19.5,11.5Z" fill="#e84858"/><path d="M19,13 A7,5.6000000000000005 0 0,1 6.5,15.5" fill="none" stroke="#f08898" stroke-width="3.4"/><path d="M9.5,18.5 L3.5,19 L4.5,12.5Z" fill="#f08898"/></svg><div class="abs" style="left:1212px;top:20px;width:19px;height:19px;background:#fddc72"></div><svg style="left:1212px;top:21px" width="18" height="18" viewBox="0 0 24 24"><path d="M3,3 l4,2 l3,-4 l1,5 l5,0 l-4,3 l2,5 l-5,-3 l-5,3 l2,-5Z" fill="#e860c0" stroke="#a03090" stroke-width="0.500"/><circle cx="8" cy="8" r="2.500" fill="#f8e040"/><path d="M10,9 l2,11 l2.500,-3 l3.500,5 l2,-1.500 l-3.500,-5 l4,-1Z" fill="#e8e8f0" stroke="#555" stroke-width="0.800"/></svg><svg style="left:1244.5px;top:21px" width="18" height="18" viewBox="0 0 24 24"><path d="M6,9 L13,3 L22,2.500 L22,8 L16,11 L10,12Z" fill="#e8b078" stroke="#9a6a38" stroke-width="0.700"/><path d="M14,3 L22,2.500 L22,5.500Z" fill="#c88848"/><path d="M4,13 l5,-4 l5,4 v9 h-10Z" fill="#8ab0e8" stroke="#2a4a9a" stroke-width="0.900"/><circle cx="7" cy="18" r="1.300" fill="#fff"/><circle cx="11" cy="18" r="1.300" fill="#fff"/><circle cx="9" cy="14.500" r="1.300" fill="#fff"/></svg><svg style="left:1275.5px;top:21px" width="18" height="18" viewBox="0 0 24 24"><ellipse cx="12" cy="22.500" rx="7" ry="1.500" fill="rgba(60,60,90,0.4)"/><text x="12" y="20" text-anchor="middle" font-family="'Liberation Sans',sans-serif" font-size="24" font-weight="bold" fill="#3f72c4" stroke="#2a4a90" stroke-width="0.500">?</text></svg><svg style="left:1306px;top:20.5px" width="19" height="19" viewBox="0 0 24 24"><polygon points="6,4 12,1.500 18,4 12,6.500" fill="#8ab8f0" stroke="#2a4a9a" stroke-width="0.600"/><polygon points="6,4 12,6.500 12,13 6,10.500" fill="#4a80d8" stroke="#2a4a9a" stroke-width="0.600"/><polygon points="18,4 12,6.500 12,13 18,10.500" fill="#2a58b0" stroke="#2a4a9a" stroke-width="0.600"/><polygon points="12,12 18,9.500 24,12 18,14.500" fill="#d8dce0" stroke="#222" stroke-width="0.600"/><polygon points="12,12 18,14.500 18,22 12,19.500" fill="#8a9098" stroke="#222" stroke-width="0.600"/><polygon points="24,12 18,14.500 18,22 24,19.500" fill="#4a5058" stroke="#222" stroke-width="0.600"/><path d="M1,15 h9" stroke="#e81818" stroke-width="2"/><polygon points="12,15 7,11.500 7,18.500" fill="#e81818"/><path d="M2,11 l4,3 M2,19 l4,-3" stroke="#e81818" stroke-width="1.400"/></svg><div class="abs" style="left:1336px;top:20px;width:19px;height:19px;background:#fddc72"></div><svg style="left:1336.5px;top:21px" width="18" height="18" viewBox="0 0 24 24"><polygon points="3,7 12,3 21,7 12,11" fill="#e040e0" stroke="#222" stroke-width="0.700"/><polygon points="3,7 12,11 12,22 3,18" fill="#9ab0c0" stroke="#222" stroke-width="0.700"/><polygon points="21,7 12,11 12,22 21,18" fill="#5a7888" stroke="#222" stroke-width="0.700"/><polygon points="5,9 10.500,11.500 10.500,19.500 5,17" fill="#b8d0dc"/></svg><div class="abs" style="left:1371px;top:29px;width:12px;height:9px;border:1.500px solid #777;background:#e8e8e8"></div><svg style="left:1399px;top:18px" width="18" height="18" viewBox="0 0 18 18"><circle cx="9" cy="9" r="7.500" fill="#fff" stroke="#2a9a28" stroke-width="2"/><path d="M9,5 v5" stroke="#223" stroke-width="2"/></svg><div class="abs" style="left:1430px;top:28px;width:14px;height:10px;border:1px solid #666;background:#dde"></div><div class="abs" style="left:1437px;top:28px;width:1px;height:10px;background:#666"></div><div class="st" style="left:1463px;top:23px;font-size:12.500px">LS: 1.00 PS: 1.00</div><div class="st" style="left:1589px;top:23px">单位: 毫米</div><div class="st" style="left:1663.500px;top:23px;font-size:12.500px;letter-spacing:0.170px">X = 10189.64 Y = 12300.42 Z = 00000.00</div><div class="abs" style="left:1360px;top:7px;width:206px;height:26px;background:#fff;border-radius:4px;box-shadow:0 0 2px rgba(0,0,0,0.35)"></div><svg style="left:1359px;top:4px" width="28" height="28" viewBox="0 0 27 28"><rect x="1" y="2" width="24" height="24" rx="4" fill="#f4541c" transform="rotate(-10 13 14)"/><path d="M19.500,8.500 q-7,-3.500 -11,-0.500 q-3,3.500 3.500,5.500 q6,1.500 4.500,4.500 q-3,3 -11,-0.500" fill="none" stroke="#fff" stroke-width="3.200" transform="rotate(-10 13 14)"/></svg><div class="st" style="left:1391px;top:9px;font-size:17px;line-height:20px;font-weight:bold;color:#1c78dc">中</div><svg style="left:1414px;top:12px" width="14" height="14" viewBox="0 0 14 14"><circle cx="3" cy="4" r="1.800" fill="none" stroke="#1c78dc" stroke-width="1.300"/><path d="M9.500,7 q2.500,0.500 0.500,5" fill="none" stroke="#1c78dc" stroke-width="2.200" stroke-linecap="round"/></svg><svg style="left:1436px;top:12px" width="16" height="16" viewBox="0 0 16 16"><circle cx="8" cy="8" r="6.800" fill="none" stroke="#1c78dc" stroke-width="1.500"/><circle cx="5.500" cy="6" r="1" fill="#1c78dc"/><circle cx="10.500" cy="6" r="1" fill="#1c78dc"/><path d="M4.500,9.500 q3.500,3.500 7,0" fill="none" stroke="#1c78dc" stroke-width="1.400"/></svg><svg style="left:1458px;top:11.5px" width="16" height="17" viewBox="0 0 16 17"><rect x="5" y="0.500" width="6" height="10" rx="3" fill="#1c78dc"/><path d="M2.500,7 q0,6 5.500,6 q5.500,0 5.500,-6 M8,13 v3" fill="none" stroke="#1c78dc" stroke-width="1.500"/></svg><svg style="left:1479px;top:12.5px" width="18" height="15" viewBox="0 0 18 15"><rect x="0.500" y="2" width="17" height="11" rx="1.500" fill="#1c78dc"/><path d="M3,5 h2 M6.500,5 h2 M10,5 h2 M13.500,5 h2 M3,7.500 h2 M6.500,7.500 h2 M10,7.500 h2 M13.500,7.500 h2 M5,10.500 h8" stroke="#fff" stroke-width="1.300"/></svg><svg style="left:1502.5px;top:12px" width="17" height="16" viewBox="0 0 17 16"><circle cx="7" cy="4.500" r="3.500" fill="#c4c8cc"/><path d="M1,15 q0,-7 6,-7 q6,0 6,7Z" fill="#c4c8cc"/><rect x="9" y="9" width="7" height="6" rx="1" fill="#dde" stroke="#aab" stroke-width="0.500"/></svg><svg style="left:1525px;top:12px" width="16" height="16" viewBox="0 0 16 16"><path d="M5,1 q3,2.500 6,0 l5,3 l-2.500,4 l-2,-1 v8 h-7 v-8 l-2,1 l-2.500,-4Z" fill="#1c78dc"/></svg><svg style="left:1546.5px;top:12.5px" width="15" height="15" viewBox="0 0 15 15"><rect x="0.500" y="0.500" width="6" height="6" fill="#1c78dc"/><rect x="8.500" y="0.500" width="6" height="6" fill="none" stroke="#1c78dc" stroke-width="1.300"/><rect x="0.500" y="8.500" width="6" height="6" fill="#1c78dc"/><rect x="8.500" y="8.500" width="6" height="6" fill="#1c78dc"/></svg></div>
<div id="task" class="abs"><div class="abs" style="left:48px;top:0;width:344px;height:8px;background:#f2f2f2"></div><div class="abs" style="left:589px;top:0;width:46px;height:8px;background:#4c4c4c"></div><div class="abs" style="left:635px;top:0;width:2px;height:8px;background:#3a3a3a"></div><div class="abs" style="left:1815px;top:3.500px;font-size:12.500px;line-height:12px;color:#fff">17:04</div></div>
</body></html>
